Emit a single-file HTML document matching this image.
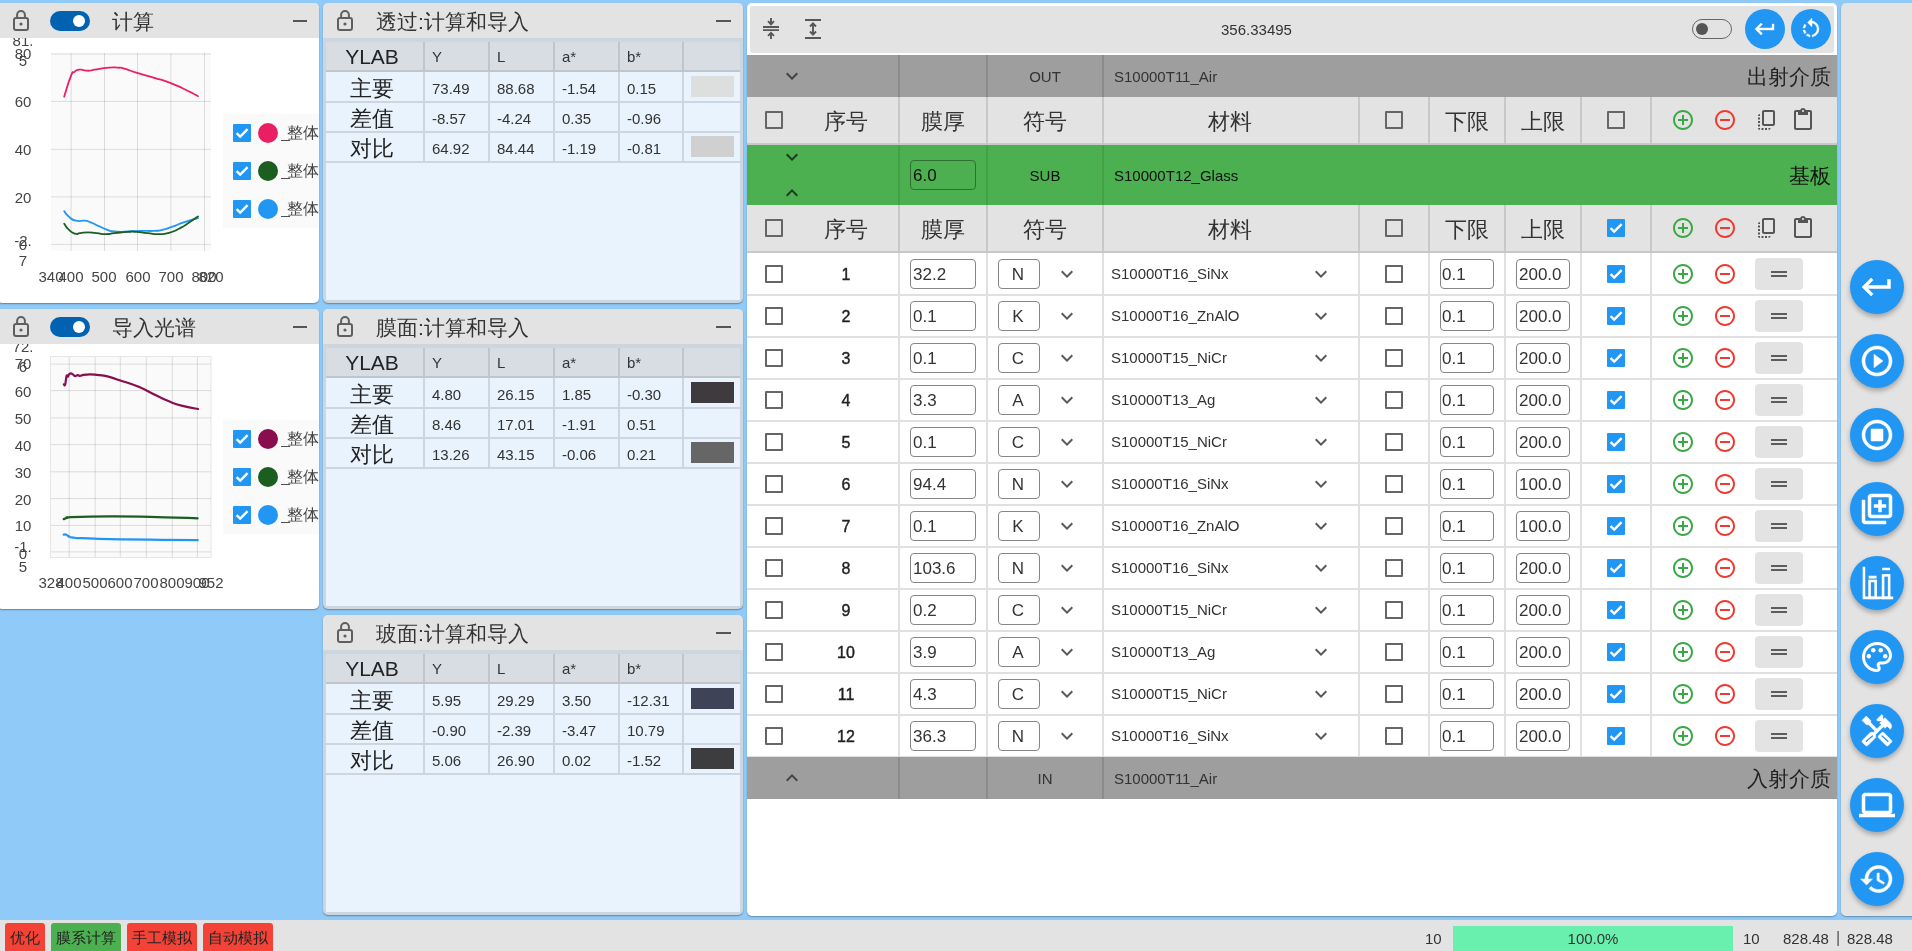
<!DOCTYPE html><html><head><meta charset="utf-8"><style>
html,body{margin:0;padding:0;}
body{width:1912px;height:951px;overflow:hidden;position:relative;background:#90CAF9;font-family:"Liberation Sans",sans-serif;color:#333;}
div{box-sizing:content-box;}
.inp{position:absolute;border:1px solid #858585;border-radius:4px;background:#fff;box-sizing:border-box;}
.fab{position:absolute;width:54px;height:54px;border-radius:50%;background:#2196F3;box-shadow:0 3px 5px rgba(0,0,0,.28);}
</style></head><body>

<div style="position:absolute;left:-3px;top:3px;width:322px;height:300px;background:#fff;border-radius:5px;box-shadow:0 1px 1.5px rgba(0,0,0,.35)"></div>
<div style="position:absolute;left:-3px;top:3px;width:322px;height:35px;background:#E3E3E3;border-radius:5px 5px 0 0;z-index:2"></div>
<svg style="position:absolute;left:13px;top:9px;width:17px;height:24px;z-index:3" viewBox="0 0 17 24"><path d="M4.1 9V6a3.9 3.9 0 0 1 7.8 0V9" fill="none" stroke="#5f5f5f" stroke-width="2"/><rect x="1" y="9" width="14" height="11.9" rx="2" fill="none" stroke="#5f5f5f" stroke-width="2"/><circle cx="8" cy="15" r="1.6" fill="#5f5f5f"/></svg>
<div style="position:absolute;left:50px;top:11px;width:40px;height:20px;z-index:3;background:#0062B1;border-radius:10px"><div style="position:absolute;left:23px;top:4px;width:12px;height:12px;background:#fff;border-radius:50%"></div></div>
<div style="position:absolute;left:112px;top:11px;font-size:21px;line-height:1;color:#333;white-space:nowrap;will-change:transform;z-index:3">计算</div>
<div style="position:absolute;left:293px;top:20px;width:14px;height:2px;background:#555;z-index:3"></div>
<div style="position:absolute;left:-3px;top:309px;width:322px;height:300px;background:#fff;border-radius:5px;box-shadow:0 1px 1.5px rgba(0,0,0,.35)"></div>
<div style="position:absolute;left:-3px;top:309px;width:322px;height:35px;background:#E3E3E3;border-radius:5px 5px 0 0;z-index:2"></div>
<svg style="position:absolute;left:13px;top:315px;width:17px;height:24px;z-index:3" viewBox="0 0 17 24"><path d="M4.1 9V6a3.9 3.9 0 0 1 7.8 0V9" fill="none" stroke="#5f5f5f" stroke-width="2"/><rect x="1" y="9" width="14" height="11.9" rx="2" fill="none" stroke="#5f5f5f" stroke-width="2"/><circle cx="8" cy="15" r="1.6" fill="#5f5f5f"/></svg>
<div style="position:absolute;left:50px;top:317px;width:40px;height:20px;z-index:3;background:#0062B1;border-radius:10px"><div style="position:absolute;left:23px;top:4px;width:12px;height:12px;background:#fff;border-radius:50%"></div></div>
<div style="position:absolute;left:112px;top:317px;font-size:21px;line-height:1;color:#333;white-space:nowrap;will-change:transform;z-index:3">导入光谱</div>
<div style="position:absolute;left:293px;top:326px;width:14px;height:2px;background:#555;z-index:3"></div>
<div style="position:absolute;left:223px;top:114px;width:96px;height:114px;background:#FAFAFA"></div>
<div style="position:absolute;left:233px;top:124px;width:18px;height:18px;background:#2196F3;border-radius:1px"><svg style="position:absolute;left:0;top:0;width:18px;height:18px" viewBox="0 0 18 18"><path d="M3.6 9.2L7.2 12.6L14.6 5.2" fill="none" stroke="#fff" stroke-width="2.4"/></svg></div>
<div style="position:absolute;left:258px;top:123px;width:20px;height:20px;background:#E91E63;border-radius:50%"></div>
<div style="position:absolute;left:281px;top:125px;width:38px;overflow:hidden;font-size:16px;line-height:1;color:#444;white-space:nowrap;will-change:transform"><span style="letter-spacing:-3px">_</span>整体透</div>
<div style="position:absolute;left:233px;top:162px;width:18px;height:18px;background:#2196F3;border-radius:1px"><svg style="position:absolute;left:0;top:0;width:18px;height:18px" viewBox="0 0 18 18"><path d="M3.6 9.2L7.2 12.6L14.6 5.2" fill="none" stroke="#fff" stroke-width="2.4"/></svg></div>
<div style="position:absolute;left:258px;top:161px;width:20px;height:20px;background:#1B5E20;border-radius:50%"></div>
<div style="position:absolute;left:281px;top:163px;width:38px;overflow:hidden;font-size:16px;line-height:1;color:#444;white-space:nowrap;will-change:transform"><span style="letter-spacing:-3px">_</span>整体透</div>
<div style="position:absolute;left:233px;top:200px;width:18px;height:18px;background:#2196F3;border-radius:1px"><svg style="position:absolute;left:0;top:0;width:18px;height:18px" viewBox="0 0 18 18"><path d="M3.6 9.2L7.2 12.6L14.6 5.2" fill="none" stroke="#fff" stroke-width="2.4"/></svg></div>
<div style="position:absolute;left:258px;top:199px;width:20px;height:20px;background:#2196F3;border-radius:50%"></div>
<div style="position:absolute;left:281px;top:201px;width:38px;overflow:hidden;font-size:16px;line-height:1;color:#444;white-space:nowrap;will-change:transform"><span style="letter-spacing:-3px">_</span>整体透</div>
<div style="position:absolute;left:223px;top:420px;width:96px;height:114px;background:#FAFAFA"></div>
<div style="position:absolute;left:233px;top:430px;width:18px;height:18px;background:#2196F3;border-radius:1px"><svg style="position:absolute;left:0;top:0;width:18px;height:18px" viewBox="0 0 18 18"><path d="M3.6 9.2L7.2 12.6L14.6 5.2" fill="none" stroke="#fff" stroke-width="2.4"/></svg></div>
<div style="position:absolute;left:258px;top:429px;width:20px;height:20px;background:#880E4F;border-radius:50%"></div>
<div style="position:absolute;left:281px;top:431px;width:38px;overflow:hidden;font-size:16px;line-height:1;color:#444;white-space:nowrap;will-change:transform"><span style="letter-spacing:-3px">_</span>整体透</div>
<div style="position:absolute;left:233px;top:468px;width:18px;height:18px;background:#2196F3;border-radius:1px"><svg style="position:absolute;left:0;top:0;width:18px;height:18px" viewBox="0 0 18 18"><path d="M3.6 9.2L7.2 12.6L14.6 5.2" fill="none" stroke="#fff" stroke-width="2.4"/></svg></div>
<div style="position:absolute;left:258px;top:467px;width:20px;height:20px;background:#1B5E20;border-radius:50%"></div>
<div style="position:absolute;left:281px;top:469px;width:38px;overflow:hidden;font-size:16px;line-height:1;color:#444;white-space:nowrap;will-change:transform"><span style="letter-spacing:-3px">_</span>整体透</div>
<div style="position:absolute;left:233px;top:506px;width:18px;height:18px;background:#2196F3;border-radius:1px"><svg style="position:absolute;left:0;top:0;width:18px;height:18px" viewBox="0 0 18 18"><path d="M3.6 9.2L7.2 12.6L14.6 5.2" fill="none" stroke="#fff" stroke-width="2.4"/></svg></div>
<div style="position:absolute;left:258px;top:505px;width:20px;height:20px;background:#2196F3;border-radius:50%"></div>
<div style="position:absolute;left:281px;top:507px;width:38px;overflow:hidden;font-size:16px;line-height:1;color:#444;white-space:nowrap;will-change:transform"><span style="letter-spacing:-3px">_</span>整体透</div>
<svg style="position:absolute;left:0;top:38px;width:319px;height:262px" viewBox="0 38 319 262">
<rect x="51" y="53" width="160" height="198" fill="#FAFAFA"/>
<line x1="71.1" y1="53" x2="71.1" y2="251" stroke="rgba(0,0,0,0.12)" stroke-width="1"/>
<line x1="104.5" y1="53" x2="104.5" y2="251" stroke="rgba(0,0,0,0.12)" stroke-width="1"/>
<line x1="137.5" y1="53" x2="137.5" y2="251" stroke="rgba(0,0,0,0.12)" stroke-width="1"/>
<line x1="170.9" y1="53" x2="170.9" y2="251" stroke="rgba(0,0,0,0.12)" stroke-width="1"/>
<line x1="204.5" y1="53" x2="204.5" y2="251" stroke="rgba(0,0,0,0.12)" stroke-width="1"/>
<line x1="51" y1="54" x2="211" y2="54" stroke="rgba(0,0,0,0.12)" stroke-width="1"/>
<line x1="51" y1="101.4" x2="211" y2="101.4" stroke="rgba(0,0,0,0.12)" stroke-width="1"/>
<line x1="51" y1="149.3" x2="211" y2="149.3" stroke="rgba(0,0,0,0.12)" stroke-width="1"/>
<line x1="51" y1="196.9" x2="211" y2="196.9" stroke="rgba(0,0,0,0.12)" stroke-width="1"/>
<line x1="51" y1="244.4" x2="211" y2="244.4" stroke="rgba(0,0,0,0.12)" stroke-width="1"/>
<path d="M64.20,96.60 C66.37,89.97 67.37,84.90 70.70,76.70 C74.03,68.50 71.33,74.33 74.20,72.00 C77.07,69.67 75.87,70.27 79.30,69.70 C82.73,69.13 81.03,69.97 84.50,70.30 C87.97,70.63 86.23,70.90 89.70,70.70 C93.17,70.50 88.57,70.70 94.90,69.70 C101.23,68.70 100.93,68.37 108.70,67.70 C116.47,67.03 113.03,67.40 118.20,67.70 C123.37,68.00 117.90,66.87 124.20,68.60 C130.50,70.33 127.33,69.90 137.10,72.90 C146.87,75.90 142.27,74.17 153.50,77.60 C164.73,81.03 159.30,78.73 170.80,83.20 C182.30,87.67 178.93,86.67 188.00,91.00 C197.07,95.33 194.67,94.47 198.00,96.20" fill="none" stroke="#E91E63" stroke-width="1.8" stroke-linejoin="round" stroke-linecap="round"/>
<path d="M64.20,211.20 C65.80,213.07 65.10,213.63 69.00,216.80 C72.90,219.97 70.73,219.40 75.90,220.70 C81.07,222.00 79.60,220.17 84.50,220.70 C89.40,221.23 86.00,220.57 90.60,222.30 C95.20,224.03 93.13,223.57 98.30,225.90 C103.47,228.23 100.63,227.43 106.10,229.30 C111.57,231.17 107.50,230.77 114.70,231.50 C121.90,232.23 119.07,231.70 127.70,231.50 C136.33,231.30 132.00,231.10 140.60,230.90 C149.20,230.70 146.30,231.27 153.50,230.90 C160.70,230.53 155.87,231.20 162.20,229.80 C168.53,228.40 165.33,229.17 172.50,226.70 C179.67,224.23 175.20,225.27 183.70,222.40 C192.20,219.53 193.23,219.53 198.00,218.10" fill="none" stroke="#2196F3" stroke-width="1.8" stroke-linejoin="round" stroke-linecap="round"/>
<path d="M64.20,223.70 C65.80,225.73 65.40,226.50 69.00,229.80 C72.60,233.10 71.27,232.47 75.00,233.60 C78.73,234.73 75.87,233.60 80.20,233.20 C84.53,232.80 82.53,232.40 88.00,232.40 C93.47,232.40 90.57,232.63 96.60,233.20 C102.63,233.77 100.07,234.10 106.10,234.10 C112.13,234.10 107.50,233.97 114.70,233.20 C121.90,232.43 120.50,232.27 127.70,231.80 C134.90,231.33 129.70,231.33 136.30,231.80 C142.90,232.27 140.03,232.43 147.50,233.20 C154.97,233.97 151.50,234.23 158.70,234.10 C165.90,233.97 162.20,234.67 169.10,232.80 C176.00,230.93 173.10,231.67 179.40,228.50 C185.70,225.33 181.80,227.33 188.00,223.30 C194.20,219.27 194.67,218.70 198.00,216.40" fill="none" stroke="#1B5E20" stroke-width="1.8" stroke-linejoin="round" stroke-linecap="round"/>
</svg>
<div style="position:absolute;left:-177px;top:46px;width:400px;text-align:center;font-size:15px;line-height:1;color:#444;white-space:nowrap;will-change:transform;">80</div>
<div style="position:absolute;left:-177px;top:33px;width:400px;text-align:center;font-size:15px;line-height:1;color:#444;white-space:nowrap;will-change:transform;">81.</div>
<div style="position:absolute;left:-177px;top:53px;width:400px;text-align:center;font-size:15px;line-height:1;color:#444;white-space:nowrap;will-change:transform;">5</div>
<div style="position:absolute;left:-177px;top:94px;width:400px;text-align:center;font-size:15px;line-height:1;color:#444;white-space:nowrap;will-change:transform;">60</div>
<div style="position:absolute;left:-177px;top:142px;width:400px;text-align:center;font-size:15px;line-height:1;color:#444;white-space:nowrap;will-change:transform;">40</div>
<div style="position:absolute;left:-177px;top:190px;width:400px;text-align:center;font-size:15px;line-height:1;color:#444;white-space:nowrap;will-change:transform;">20</div>
<div style="position:absolute;left:-177px;top:233px;width:400px;text-align:center;font-size:15px;line-height:1;color:#444;white-space:nowrap;will-change:transform;">-2.</div>
<div style="position:absolute;left:-177px;top:237px;width:400px;text-align:center;font-size:15px;line-height:1;color:#444;white-space:nowrap;will-change:transform;">0</div>
<div style="position:absolute;left:-177px;top:253px;width:400px;text-align:center;font-size:15px;line-height:1;color:#444;white-space:nowrap;will-change:transform;">7</div>
<div style="position:absolute;left:-149px;top:269px;width:400px;text-align:center;font-size:15px;line-height:1;color:#444;white-space:nowrap;will-change:transform;">340</div>
<div style="position:absolute;left:-129px;top:269px;width:400px;text-align:center;font-size:15px;line-height:1;color:#444;white-space:nowrap;will-change:transform;">400</div>
<div style="position:absolute;left:-96px;top:269px;width:400px;text-align:center;font-size:15px;line-height:1;color:#444;white-space:nowrap;will-change:transform;">500</div>
<div style="position:absolute;left:-62px;top:269px;width:400px;text-align:center;font-size:15px;line-height:1;color:#444;white-space:nowrap;will-change:transform;">600</div>
<div style="position:absolute;left:-29px;top:269px;width:400px;text-align:center;font-size:15px;line-height:1;color:#444;white-space:nowrap;will-change:transform;">700</div>
<div style="position:absolute;left:4px;top:269px;width:400px;text-align:center;font-size:15px;line-height:1;color:#444;white-space:nowrap;will-change:transform;">800</div>
<div style="position:absolute;left:11px;top:269px;width:400px;text-align:center;font-size:15px;line-height:1;color:#444;white-space:nowrap;will-change:transform;">820</div>
<svg style="position:absolute;left:0;top:345px;width:319px;height:262px" viewBox="0 345 319 262">
<rect x="50.5" y="356.5" width="160.5" height="201" fill="#FAFAFA" stroke="#E6E6E6" stroke-width="1"/>
<line x1="69.2" y1="357" x2="69.2" y2="557" stroke="rgba(0,0,0,0.12)" stroke-width="1"/>
<line x1="95.2" y1="357" x2="95.2" y2="557" stroke="rgba(0,0,0,0.12)" stroke-width="1"/>
<line x1="120.3" y1="357" x2="120.3" y2="557" stroke="rgba(0,0,0,0.12)" stroke-width="1"/>
<line x1="146.3" y1="357" x2="146.3" y2="557" stroke="rgba(0,0,0,0.12)" stroke-width="1"/>
<line x1="172.3" y1="357" x2="172.3" y2="557" stroke="rgba(0,0,0,0.12)" stroke-width="1"/>
<line x1="197.4" y1="357" x2="197.4" y2="557" stroke="rgba(0,0,0,0.12)" stroke-width="1"/>
<line x1="51" y1="364.1" x2="211" y2="364.1" stroke="rgba(0,0,0,0.12)" stroke-width="1"/>
<line x1="51" y1="390.6" x2="211" y2="390.6" stroke="rgba(0,0,0,0.12)" stroke-width="1"/>
<line x1="51" y1="417.9" x2="211" y2="417.9" stroke="rgba(0,0,0,0.12)" stroke-width="1"/>
<line x1="51" y1="444.7" x2="211" y2="444.7" stroke="rgba(0,0,0,0.12)" stroke-width="1"/>
<line x1="51" y1="471.8" x2="211" y2="471.8" stroke="rgba(0,0,0,0.12)" stroke-width="1"/>
<line x1="51" y1="498.6" x2="211" y2="498.6" stroke="rgba(0,0,0,0.12)" stroke-width="1"/>
<line x1="51" y1="525.4" x2="211" y2="525.4" stroke="rgba(0,0,0,0.12)" stroke-width="1"/>
<line x1="51" y1="551.9" x2="211" y2="551.9" stroke="rgba(0,0,0,0.12)" stroke-width="1"/>
<path d="M63.80,384.30 C64.04,384.46 64.58,385.94 65.00,385.10 C65.42,384.26 65.56,382.02 65.90,380.10 C66.24,378.18 66.28,376.18 66.70,375.50 C67.12,374.82 67.58,376.88 68.00,376.70 C68.42,376.52 68.22,375.26 68.80,374.60 C69.38,373.94 70.14,373.50 70.90,373.40 C71.66,373.30 71.76,373.56 72.60,374.10 C73.44,374.64 74.10,375.90 75.10,376.10 C76.10,376.30 76.60,375.14 77.60,375.10 C78.60,375.06 78.92,375.94 80.10,375.90 C81.28,375.86 81.50,375.20 83.50,374.90 C85.50,374.60 87.44,374.40 90.10,374.40 C92.76,374.40 93.78,374.60 96.80,374.90 C99.82,375.20 100.50,374.78 105.20,375.90 C109.90,377.02 113.60,378.32 120.30,380.50 C127.00,382.68 131.68,383.88 138.70,386.80 C145.72,389.72 148.70,391.92 155.40,395.10 C162.10,398.28 166.34,400.44 172.20,402.70 C178.06,404.96 179.52,405.14 184.70,406.40 C189.88,407.66 195.42,408.48 198.10,409.00" fill="none" stroke="#880E4F" stroke-width="2.2" stroke-linejoin="round" stroke-linecap="round"/>
<path d="M63.70,519.10 C64.36,518.88 65.52,518.38 67.00,518.00 C68.48,517.62 62.62,517.52 71.10,517.20 C79.58,516.88 93.62,516.48 109.40,516.40 C125.18,516.32 132.34,516.42 150.00,516.80 C167.66,517.18 188.16,518.00 197.70,518.30" fill="none" stroke="#1B5E20" stroke-width="2.2" stroke-linejoin="round" stroke-linecap="round"/>
<path d="M63.70,534.70 C64.16,534.66 65.14,534.24 66.00,534.50 C66.86,534.76 67.20,535.50 68.00,536.00 C68.80,536.50 69.38,536.72 70.00,537.00 C70.62,537.28 69.90,537.20 71.10,537.40 C72.30,537.60 73.82,537.84 76.00,538.00 C78.18,538.16 75.32,537.98 82.00,538.20 C88.68,538.42 95.80,538.80 109.40,539.10 C123.00,539.40 132.34,539.48 150.00,539.70 C167.66,539.92 188.16,540.10 197.70,540.20" fill="none" stroke="#2196F3" stroke-width="2.2" stroke-linejoin="round" stroke-linecap="round"/>
</svg>
<div style="position:absolute;left:-177px;top:339px;width:400px;text-align:center;font-size:15px;line-height:1;color:#444;white-space:nowrap;will-change:transform;">72.</div>
<div style="position:absolute;left:-177px;top:356px;width:400px;text-align:center;font-size:15px;line-height:1;color:#444;white-space:nowrap;will-change:transform;">70</div>
<div style="position:absolute;left:-177px;top:359px;width:400px;text-align:center;font-size:15px;line-height:1;color:#444;white-space:nowrap;will-change:transform;">6</div>
<div style="position:absolute;left:-177px;top:384px;width:400px;text-align:center;font-size:15px;line-height:1;color:#444;white-space:nowrap;will-change:transform;">60</div>
<div style="position:absolute;left:-177px;top:411px;width:400px;text-align:center;font-size:15px;line-height:1;color:#444;white-space:nowrap;will-change:transform;">50</div>
<div style="position:absolute;left:-177px;top:438px;width:400px;text-align:center;font-size:15px;line-height:1;color:#444;white-space:nowrap;will-change:transform;">40</div>
<div style="position:absolute;left:-177px;top:465px;width:400px;text-align:center;font-size:15px;line-height:1;color:#444;white-space:nowrap;will-change:transform;">30</div>
<div style="position:absolute;left:-177px;top:492px;width:400px;text-align:center;font-size:15px;line-height:1;color:#444;white-space:nowrap;will-change:transform;">20</div>
<div style="position:absolute;left:-177px;top:518px;width:400px;text-align:center;font-size:15px;line-height:1;color:#444;white-space:nowrap;will-change:transform;">10</div>
<div style="position:absolute;left:-177px;top:539px;width:400px;text-align:center;font-size:15px;line-height:1;color:#444;white-space:nowrap;will-change:transform;">-1.</div>
<div style="position:absolute;left:-177px;top:546px;width:400px;text-align:center;font-size:15px;line-height:1;color:#444;white-space:nowrap;will-change:transform;">0</div>
<div style="position:absolute;left:-177px;top:559px;width:400px;text-align:center;font-size:15px;line-height:1;color:#444;white-space:nowrap;will-change:transform;">5</div>
<div style="position:absolute;left:-149px;top:575px;width:400px;text-align:center;font-size:15px;line-height:1;color:#444;white-space:nowrap;will-change:transform;">328</div>
<div style="position:absolute;left:-131px;top:575px;width:400px;text-align:center;font-size:15px;line-height:1;color:#444;white-space:nowrap;will-change:transform;">400</div>
<div style="position:absolute;left:-105px;top:575px;width:400px;text-align:center;font-size:15px;line-height:1;color:#444;white-space:nowrap;will-change:transform;">500</div>
<div style="position:absolute;left:-80px;top:575px;width:400px;text-align:center;font-size:15px;line-height:1;color:#444;white-space:nowrap;will-change:transform;">600</div>
<div style="position:absolute;left:-54px;top:575px;width:400px;text-align:center;font-size:15px;line-height:1;color:#444;white-space:nowrap;will-change:transform;">700</div>
<div style="position:absolute;left:-28px;top:575px;width:400px;text-align:center;font-size:15px;line-height:1;color:#444;white-space:nowrap;will-change:transform;">800</div>
<div style="position:absolute;left:-3px;top:575px;width:400px;text-align:center;font-size:15px;line-height:1;color:#444;white-space:nowrap;will-change:transform;">900</div>
<div style="position:absolute;left:11px;top:575px;width:400px;text-align:center;font-size:15px;line-height:1;color:#444;white-space:nowrap;will-change:transform;">952</div>
<div style="position:absolute;left:323px;top:3px;width:420px;height:300px;background:#CDD5DF;border-radius:5px;box-shadow:0 1px 1.5px rgba(0,0,0,.35)"></div>
<div style="position:absolute;left:323px;top:3px;width:420px;height:35px;background:#E3E3E3;border-radius:5px 5px 0 0"></div>
<svg style="position:absolute;left:337px;top:9px;width:17px;height:24px" viewBox="0 0 17 24"><path d="M4.1 9V6a3.9 3.9 0 0 1 7.8 0V9" fill="none" stroke="#5f5f5f" stroke-width="2"/><rect x="1" y="9" width="14" height="11.9" rx="2" fill="none" stroke="#5f5f5f" stroke-width="2"/><circle cx="8" cy="15" r="1.6" fill="#5f5f5f"/></svg>
<div style="position:absolute;left:376px;top:11px;font-size:21px;line-height:1;color:#333;white-space:nowrap;will-change:transform;">透过:计算和导入</div>
<div style="position:absolute;left:716px;top:20px;width:15px;height:2px;background:#555"></div>
<div style="position:absolute;left:326px;top:42px;width:414px;height:258px;background:#E8F3FD"></div>
<div style="position:absolute;left:326px;top:42px;width:414px;height:28px;background:#D8DDE4"></div>
<div style="position:absolute;left:326px;top:70px;width:414px;height:2px;background:#BFC5CB"></div>
<div style="position:absolute;left:423px;top:42px;width:2px;height:28px;background:#BFC5CB"></div>
<div style="position:absolute;left:423px;top:72px;width:2px;height:91px;background:#CDD5DF"></div>
<div style="position:absolute;left:488px;top:42px;width:2px;height:28px;background:#BFC5CB"></div>
<div style="position:absolute;left:488px;top:72px;width:2px;height:91px;background:#CDD5DF"></div>
<div style="position:absolute;left:553px;top:42px;width:2px;height:28px;background:#BFC5CB"></div>
<div style="position:absolute;left:553px;top:72px;width:2px;height:91px;background:#CDD5DF"></div>
<div style="position:absolute;left:618px;top:42px;width:2px;height:28px;background:#BFC5CB"></div>
<div style="position:absolute;left:618px;top:72px;width:2px;height:91px;background:#CDD5DF"></div>
<div style="position:absolute;left:682px;top:42px;width:2px;height:28px;background:#BFC5CB"></div>
<div style="position:absolute;left:682px;top:72px;width:2px;height:91px;background:#CDD5DF"></div>
<div style="position:absolute;left:326px;top:101px;width:414px;height:2px;background:#CDD5DF"></div>
<div style="position:absolute;left:326px;top:131px;width:414px;height:2px;background:#CDD5DF"></div>
<div style="position:absolute;left:326px;top:161px;width:414px;height:2px;background:#CDD5DF"></div>
<div style="position:absolute;left:172px;top:46px;width:400px;text-align:center;font-size:21px;line-height:1;color:#222;white-space:nowrap;will-change:transform;">YLAB</div>
<div style="position:absolute;left:432px;top:49px;font-size:15px;line-height:1;color:#333;white-space:nowrap;will-change:transform;">Y</div>
<div style="position:absolute;left:497px;top:49px;font-size:15px;line-height:1;color:#333;white-space:nowrap;will-change:transform;">L</div>
<div style="position:absolute;left:562px;top:49px;font-size:15px;line-height:1;color:#333;white-space:nowrap;will-change:transform;">a*</div>
<div style="position:absolute;left:627px;top:49px;font-size:15px;line-height:1;color:#333;white-space:nowrap;will-change:transform;">b*</div>
<div style="position:absolute;left:172px;top:78px;width:400px;text-align:center;font-size:22px;line-height:1;color:#222;white-space:nowrap;will-change:transform;">主要</div>
<div style="position:absolute;left:432px;top:81px;font-size:15px;line-height:1;color:#333;white-space:nowrap;will-change:transform;">73.49</div>
<div style="position:absolute;left:497px;top:81px;font-size:15px;line-height:1;color:#333;white-space:nowrap;will-change:transform;">88.68</div>
<div style="position:absolute;left:562px;top:81px;font-size:15px;line-height:1;color:#333;white-space:nowrap;will-change:transform;">-1.54</div>
<div style="position:absolute;left:627px;top:81px;font-size:15px;line-height:1;color:#333;white-space:nowrap;will-change:transform;">0.15</div>
<div style="position:absolute;left:691px;top:76px;width:43px;height:21px;background:#DCDFDE"></div>
<div style="position:absolute;left:172px;top:108px;width:400px;text-align:center;font-size:22px;line-height:1;color:#222;white-space:nowrap;will-change:transform;">差值</div>
<div style="position:absolute;left:432px;top:111px;font-size:15px;line-height:1;color:#333;white-space:nowrap;will-change:transform;">-8.57</div>
<div style="position:absolute;left:497px;top:111px;font-size:15px;line-height:1;color:#333;white-space:nowrap;will-change:transform;">-4.24</div>
<div style="position:absolute;left:562px;top:111px;font-size:15px;line-height:1;color:#333;white-space:nowrap;will-change:transform;">0.35</div>
<div style="position:absolute;left:627px;top:111px;font-size:15px;line-height:1;color:#333;white-space:nowrap;will-change:transform;">-0.96</div>
<div style="position:absolute;left:172px;top:138px;width:400px;text-align:center;font-size:22px;line-height:1;color:#222;white-space:nowrap;will-change:transform;">对比</div>
<div style="position:absolute;left:432px;top:141px;font-size:15px;line-height:1;color:#333;white-space:nowrap;will-change:transform;">64.92</div>
<div style="position:absolute;left:497px;top:141px;font-size:15px;line-height:1;color:#333;white-space:nowrap;will-change:transform;">84.44</div>
<div style="position:absolute;left:562px;top:141px;font-size:15px;line-height:1;color:#333;white-space:nowrap;will-change:transform;">-1.19</div>
<div style="position:absolute;left:627px;top:141px;font-size:15px;line-height:1;color:#333;white-space:nowrap;will-change:transform;">-0.81</div>
<div style="position:absolute;left:691px;top:136px;width:43px;height:21px;background:#D0D0D0"></div>
<div style="position:absolute;left:323px;top:309px;width:420px;height:300px;background:#CDD5DF;border-radius:5px;box-shadow:0 1px 1.5px rgba(0,0,0,.35)"></div>
<div style="position:absolute;left:323px;top:309px;width:420px;height:35px;background:#E3E3E3;border-radius:5px 5px 0 0"></div>
<svg style="position:absolute;left:337px;top:315px;width:17px;height:24px" viewBox="0 0 17 24"><path d="M4.1 9V6a3.9 3.9 0 0 1 7.8 0V9" fill="none" stroke="#5f5f5f" stroke-width="2"/><rect x="1" y="9" width="14" height="11.9" rx="2" fill="none" stroke="#5f5f5f" stroke-width="2"/><circle cx="8" cy="15" r="1.6" fill="#5f5f5f"/></svg>
<div style="position:absolute;left:376px;top:317px;font-size:21px;line-height:1;color:#333;white-space:nowrap;will-change:transform;">膜面:计算和导入</div>
<div style="position:absolute;left:716px;top:326px;width:15px;height:2px;background:#555"></div>
<div style="position:absolute;left:326px;top:348px;width:414px;height:258px;background:#E8F3FD"></div>
<div style="position:absolute;left:326px;top:348px;width:414px;height:28px;background:#D8DDE4"></div>
<div style="position:absolute;left:326px;top:376px;width:414px;height:2px;background:#BFC5CB"></div>
<div style="position:absolute;left:423px;top:348px;width:2px;height:28px;background:#BFC5CB"></div>
<div style="position:absolute;left:423px;top:378px;width:2px;height:91px;background:#CDD5DF"></div>
<div style="position:absolute;left:488px;top:348px;width:2px;height:28px;background:#BFC5CB"></div>
<div style="position:absolute;left:488px;top:378px;width:2px;height:91px;background:#CDD5DF"></div>
<div style="position:absolute;left:553px;top:348px;width:2px;height:28px;background:#BFC5CB"></div>
<div style="position:absolute;left:553px;top:378px;width:2px;height:91px;background:#CDD5DF"></div>
<div style="position:absolute;left:618px;top:348px;width:2px;height:28px;background:#BFC5CB"></div>
<div style="position:absolute;left:618px;top:378px;width:2px;height:91px;background:#CDD5DF"></div>
<div style="position:absolute;left:682px;top:348px;width:2px;height:28px;background:#BFC5CB"></div>
<div style="position:absolute;left:682px;top:378px;width:2px;height:91px;background:#CDD5DF"></div>
<div style="position:absolute;left:326px;top:407px;width:414px;height:2px;background:#CDD5DF"></div>
<div style="position:absolute;left:326px;top:437px;width:414px;height:2px;background:#CDD5DF"></div>
<div style="position:absolute;left:326px;top:467px;width:414px;height:2px;background:#CDD5DF"></div>
<div style="position:absolute;left:172px;top:352px;width:400px;text-align:center;font-size:21px;line-height:1;color:#222;white-space:nowrap;will-change:transform;">YLAB</div>
<div style="position:absolute;left:432px;top:355px;font-size:15px;line-height:1;color:#333;white-space:nowrap;will-change:transform;">Y</div>
<div style="position:absolute;left:497px;top:355px;font-size:15px;line-height:1;color:#333;white-space:nowrap;will-change:transform;">L</div>
<div style="position:absolute;left:562px;top:355px;font-size:15px;line-height:1;color:#333;white-space:nowrap;will-change:transform;">a*</div>
<div style="position:absolute;left:627px;top:355px;font-size:15px;line-height:1;color:#333;white-space:nowrap;will-change:transform;">b*</div>
<div style="position:absolute;left:172px;top:384px;width:400px;text-align:center;font-size:22px;line-height:1;color:#222;white-space:nowrap;will-change:transform;">主要</div>
<div style="position:absolute;left:432px;top:387px;font-size:15px;line-height:1;color:#333;white-space:nowrap;will-change:transform;">4.80</div>
<div style="position:absolute;left:497px;top:387px;font-size:15px;line-height:1;color:#333;white-space:nowrap;will-change:transform;">26.15</div>
<div style="position:absolute;left:562px;top:387px;font-size:15px;line-height:1;color:#333;white-space:nowrap;will-change:transform;">1.85</div>
<div style="position:absolute;left:627px;top:387px;font-size:15px;line-height:1;color:#333;white-space:nowrap;will-change:transform;">-0.30</div>
<div style="position:absolute;left:691px;top:382px;width:43px;height:21px;background:#3F3A3D"></div>
<div style="position:absolute;left:172px;top:414px;width:400px;text-align:center;font-size:22px;line-height:1;color:#222;white-space:nowrap;will-change:transform;">差值</div>
<div style="position:absolute;left:432px;top:417px;font-size:15px;line-height:1;color:#333;white-space:nowrap;will-change:transform;">8.46</div>
<div style="position:absolute;left:497px;top:417px;font-size:15px;line-height:1;color:#333;white-space:nowrap;will-change:transform;">17.01</div>
<div style="position:absolute;left:562px;top:417px;font-size:15px;line-height:1;color:#333;white-space:nowrap;will-change:transform;">-1.91</div>
<div style="position:absolute;left:627px;top:417px;font-size:15px;line-height:1;color:#333;white-space:nowrap;will-change:transform;">0.51</div>
<div style="position:absolute;left:172px;top:444px;width:400px;text-align:center;font-size:22px;line-height:1;color:#222;white-space:nowrap;will-change:transform;">对比</div>
<div style="position:absolute;left:432px;top:447px;font-size:15px;line-height:1;color:#333;white-space:nowrap;will-change:transform;">13.26</div>
<div style="position:absolute;left:497px;top:447px;font-size:15px;line-height:1;color:#333;white-space:nowrap;will-change:transform;">43.15</div>
<div style="position:absolute;left:562px;top:447px;font-size:15px;line-height:1;color:#333;white-space:nowrap;will-change:transform;">-0.06</div>
<div style="position:absolute;left:627px;top:447px;font-size:15px;line-height:1;color:#333;white-space:nowrap;will-change:transform;">0.21</div>
<div style="position:absolute;left:691px;top:442px;width:43px;height:21px;background:#666666"></div>
<div style="position:absolute;left:323px;top:615px;width:420px;height:300px;background:#CDD5DF;border-radius:5px;box-shadow:0 1px 1.5px rgba(0,0,0,.35)"></div>
<div style="position:absolute;left:323px;top:615px;width:420px;height:35px;background:#E3E3E3;border-radius:5px 5px 0 0"></div>
<svg style="position:absolute;left:337px;top:621px;width:17px;height:24px" viewBox="0 0 17 24"><path d="M4.1 9V6a3.9 3.9 0 0 1 7.8 0V9" fill="none" stroke="#5f5f5f" stroke-width="2"/><rect x="1" y="9" width="14" height="11.9" rx="2" fill="none" stroke="#5f5f5f" stroke-width="2"/><circle cx="8" cy="15" r="1.6" fill="#5f5f5f"/></svg>
<div style="position:absolute;left:376px;top:623px;font-size:21px;line-height:1;color:#333;white-space:nowrap;will-change:transform;">玻面:计算和导入</div>
<div style="position:absolute;left:716px;top:632px;width:15px;height:2px;background:#555"></div>
<div style="position:absolute;left:326px;top:654px;width:414px;height:258px;background:#E8F3FD"></div>
<div style="position:absolute;left:326px;top:654px;width:414px;height:28px;background:#D8DDE4"></div>
<div style="position:absolute;left:326px;top:682px;width:414px;height:2px;background:#BFC5CB"></div>
<div style="position:absolute;left:423px;top:654px;width:2px;height:28px;background:#BFC5CB"></div>
<div style="position:absolute;left:423px;top:684px;width:2px;height:91px;background:#CDD5DF"></div>
<div style="position:absolute;left:488px;top:654px;width:2px;height:28px;background:#BFC5CB"></div>
<div style="position:absolute;left:488px;top:684px;width:2px;height:91px;background:#CDD5DF"></div>
<div style="position:absolute;left:553px;top:654px;width:2px;height:28px;background:#BFC5CB"></div>
<div style="position:absolute;left:553px;top:684px;width:2px;height:91px;background:#CDD5DF"></div>
<div style="position:absolute;left:618px;top:654px;width:2px;height:28px;background:#BFC5CB"></div>
<div style="position:absolute;left:618px;top:684px;width:2px;height:91px;background:#CDD5DF"></div>
<div style="position:absolute;left:682px;top:654px;width:2px;height:28px;background:#BFC5CB"></div>
<div style="position:absolute;left:682px;top:684px;width:2px;height:91px;background:#CDD5DF"></div>
<div style="position:absolute;left:326px;top:713px;width:414px;height:2px;background:#CDD5DF"></div>
<div style="position:absolute;left:326px;top:743px;width:414px;height:2px;background:#CDD5DF"></div>
<div style="position:absolute;left:326px;top:773px;width:414px;height:2px;background:#CDD5DF"></div>
<div style="position:absolute;left:172px;top:658px;width:400px;text-align:center;font-size:21px;line-height:1;color:#222;white-space:nowrap;will-change:transform;">YLAB</div>
<div style="position:absolute;left:432px;top:661px;font-size:15px;line-height:1;color:#333;white-space:nowrap;will-change:transform;">Y</div>
<div style="position:absolute;left:497px;top:661px;font-size:15px;line-height:1;color:#333;white-space:nowrap;will-change:transform;">L</div>
<div style="position:absolute;left:562px;top:661px;font-size:15px;line-height:1;color:#333;white-space:nowrap;will-change:transform;">a*</div>
<div style="position:absolute;left:627px;top:661px;font-size:15px;line-height:1;color:#333;white-space:nowrap;will-change:transform;">b*</div>
<div style="position:absolute;left:172px;top:690px;width:400px;text-align:center;font-size:22px;line-height:1;color:#222;white-space:nowrap;will-change:transform;">主要</div>
<div style="position:absolute;left:432px;top:693px;font-size:15px;line-height:1;color:#333;white-space:nowrap;will-change:transform;">5.95</div>
<div style="position:absolute;left:497px;top:693px;font-size:15px;line-height:1;color:#333;white-space:nowrap;will-change:transform;">29.29</div>
<div style="position:absolute;left:562px;top:693px;font-size:15px;line-height:1;color:#333;white-space:nowrap;will-change:transform;">3.50</div>
<div style="position:absolute;left:627px;top:693px;font-size:15px;line-height:1;color:#333;white-space:nowrap;will-change:transform;">-12.31</div>
<div style="position:absolute;left:691px;top:688px;width:43px;height:21px;background:#3E4357"></div>
<div style="position:absolute;left:172px;top:720px;width:400px;text-align:center;font-size:22px;line-height:1;color:#222;white-space:nowrap;will-change:transform;">差值</div>
<div style="position:absolute;left:432px;top:723px;font-size:15px;line-height:1;color:#333;white-space:nowrap;will-change:transform;">-0.90</div>
<div style="position:absolute;left:497px;top:723px;font-size:15px;line-height:1;color:#333;white-space:nowrap;will-change:transform;">-2.39</div>
<div style="position:absolute;left:562px;top:723px;font-size:15px;line-height:1;color:#333;white-space:nowrap;will-change:transform;">-3.47</div>
<div style="position:absolute;left:627px;top:723px;font-size:15px;line-height:1;color:#333;white-space:nowrap;will-change:transform;">10.79</div>
<div style="position:absolute;left:172px;top:750px;width:400px;text-align:center;font-size:22px;line-height:1;color:#222;white-space:nowrap;will-change:transform;">对比</div>
<div style="position:absolute;left:432px;top:753px;font-size:15px;line-height:1;color:#333;white-space:nowrap;will-change:transform;">5.06</div>
<div style="position:absolute;left:497px;top:753px;font-size:15px;line-height:1;color:#333;white-space:nowrap;will-change:transform;">26.90</div>
<div style="position:absolute;left:562px;top:753px;font-size:15px;line-height:1;color:#333;white-space:nowrap;will-change:transform;">0.02</div>
<div style="position:absolute;left:627px;top:753px;font-size:15px;line-height:1;color:#333;white-space:nowrap;will-change:transform;">-1.52</div>
<div style="position:absolute;left:691px;top:748px;width:43px;height:21px;background:#3D3D3F"></div>
<div style="position:absolute;left:747px;top:3px;width:1090px;height:913px;background:#fff;border-radius:5px;box-shadow:0 1px 1.5px rgba(0,0,0,.3)"></div>
<div style="position:absolute;left:750px;top:6px;width:1084px;height:46px;background:#E3E3E3;border-radius:2px;box-shadow:0 1px 1px rgba(0,0,0,.12)"></div>
<svg style="position:absolute;left:750px;top:6px;width:90px;height:46px" viewBox="0 0 90 46"><g fill="none" stroke="#575757" stroke-width="1.9"><path d="M21 12V18.3M18 15.2L21 18.3L24 15.2"/><path d="M13 21H29M13 24.1H29"/><path d="M21 33V26.8M18 29.8L21 26.8L24 29.8"/><path d="M55 14H71M55 32H71"/><path d="M63 17.5V28.5M60 20.5L63 17.3L66 20.5M60 25.5L63 28.7L66 25.5"/></g></svg>
<div style="position:absolute;left:1221px;top:22px;font-size:15px;line-height:1;color:#333;white-space:nowrap;will-change:transform;">356.33495</div>
<div style="position:absolute;left:1692px;top:19px;width:38px;height:18px;border:1px solid #666;border-radius:10px"><div style="position:absolute;left:3px;top:3px;width:12px;height:12px;background:#555;border-radius:50%"></div></div>
<div style="position:absolute;left:1745px;top:9px;width:40px;height:40px;background:#2196F3;border-radius:50%"><svg style="position:absolute;left:8px;top:8px;width:24px;height:24px" viewBox="0 0 24 24"><path fill="#fff" stroke="#fff" stroke-width="0.4" d="M19 7v4H5.83l3.58-3.59L8 6l-6 6 6 6 1.41-1.41L5.83 13H21V7z"/></svg></div>
<div style="position:absolute;left:1791px;top:9px;width:40px;height:40px;background:#2196F3;border-radius:50%"><svg style="position:absolute;left:8px;top:8px;width:24px;height:24px" viewBox="0 0 24 24"><path fill="#fff" stroke="#fff" stroke-width="0.3" d="M7.11 8.53L5.7 7.11C4.8 8.27 4.24 9.61 4.07 11h2.02c.14-.87.49-1.72 1.02-2.47zM6.09 13H4.07c.17 1.39.72 2.730 1.62 3.89l1.41-1.42c-.52-.75-.87-1.59-1.01-2.47zm1.01 5.32c1.16.9 2.51 1.44 3.9 1.61V17.9c-.87-.15-1.71-.49-2.46-1.03L7.1 18.32zM13 4.07V1L8.450 5.55 13 10V6.09c2.84.48 5 2.94 5 5.91s-2.16 5.43-5 5.91v2.02c3.95-.49 7-3.85 7-7.93s-3.05-7.44-7-7.93z"/></svg></div>
<div style="position:absolute;left:747px;top:55px;width:1090px;height:42px;background:#9E9E9E"></div>
<div style="position:absolute;left:898px;top:55px;width:2px;height:42px;background:#8C8C8C"></div>
<div style="position:absolute;left:986px;top:55px;width:2px;height:42px;background:#8C8C8C"></div>
<div style="position:absolute;left:1102px;top:55px;width:2px;height:42px;background:#8C8C8C"></div>
<svg style="position:absolute;left:780px;top:64px;width:24px;height:24px" viewBox="0 0 24 24"><path fill="#444" d="M16.59 8.59L12 13.17 7.41 8.59 6 10l6 6 6-6z"/></svg>
<div style="position:absolute;left:845px;top:69px;width:400px;text-align:center;font-size:15px;line-height:1;color:#333;white-space:nowrap;will-change:transform;">OUT</div>
<div style="position:absolute;left:1114px;top:69px;font-size:15px;line-height:1;color:#333;white-space:nowrap;will-change:transform;">S10000T11_Air</div>
<div style="position:absolute;left:1431px;top:66px;width:400px;text-align:right;font-size:21px;line-height:1;color:#222;white-space:nowrap;will-change:transform;">出射介质</div>
<div style="position:absolute;left:747px;top:97px;width:1090px;height:46px;background:#E3E3E3"></div>
<div style="position:absolute;left:747px;top:143px;width:1090px;height:2px;background:#C8C8C8"></div>
<div style="position:absolute;left:898px;top:97px;width:2px;height:46px;background:#C8C8C8"></div>
<div style="position:absolute;left:986px;top:97px;width:2px;height:46px;background:#C8C8C8"></div>
<div style="position:absolute;left:1102px;top:97px;width:2px;height:46px;background:#C8C8C8"></div>
<div style="position:absolute;left:1358px;top:97px;width:2px;height:46px;background:#C8C8C8"></div>
<div style="position:absolute;left:1428px;top:97px;width:2px;height:46px;background:#C8C8C8"></div>
<div style="position:absolute;left:1504px;top:97px;width:2px;height:46px;background:#C8C8C8"></div>
<div style="position:absolute;left:1580px;top:97px;width:2px;height:46px;background:#C8C8C8"></div>
<div style="position:absolute;left:1650px;top:97px;width:2px;height:46px;background:#C8C8C8"></div>
<div style="position:absolute;left:765px;top:111px;width:14px;height:14px;border:2px solid #666;border-radius:1px"></div>
<div style="position:absolute;left:646px;top:111px;width:400px;text-align:center;font-size:22px;line-height:1;color:#333;white-space:nowrap;will-change:transform;">序号</div>
<div style="position:absolute;left:743px;top:111px;width:400px;text-align:center;font-size:22px;line-height:1;color:#333;white-space:nowrap;will-change:transform;">膜厚</div>
<div style="position:absolute;left:845px;top:111px;width:400px;text-align:center;font-size:22px;line-height:1;color:#333;white-space:nowrap;will-change:transform;">符号</div>
<div style="position:absolute;left:1030px;top:111px;width:400px;text-align:center;font-size:22px;line-height:1;color:#333;white-space:nowrap;will-change:transform;">材料</div>
<div style="position:absolute;left:1385px;top:111px;width:14px;height:14px;border:2px solid #666;border-radius:1px"></div>
<div style="position:absolute;left:1267px;top:111px;width:400px;text-align:center;font-size:22px;line-height:1;color:#333;white-space:nowrap;will-change:transform;">下限</div>
<div style="position:absolute;left:1343px;top:111px;width:400px;text-align:center;font-size:22px;line-height:1;color:#333;white-space:nowrap;will-change:transform;">上限</div>
<div style="position:absolute;left:1607px;top:111px;width:14px;height:14px;border:2px solid #666;border-radius:1px"></div>
<svg style="position:absolute;left:1671px;top:108px;width:24px;height:24px" viewBox="0 0 24 24"><path fill="#3AA845" d="M13 7h-2v4H7v2h4v4h2v-4h4v-2h-4V7zm-1-5C6.48 2 2 6.48 2 12s4.48 10 10 10 10-4.48 10-10S17.52 2 12 2zm0 18c-4.41 0-8-3.59-8-8s3.59-8 8-8 8 3.59 8 8-3.59 8-8 8z"/></svg>
<svg style="position:absolute;left:1713px;top:108px;width:24px;height:24px" viewBox="0 0 24 24"><path fill="#F03A30" d="M7 11v2h10v-2H7zm5-9C6.48 2 2 6.48 2 12s4.48 10 10 10 10-4.48 10-10S17.52 2 12 2zm0 18c-4.41 0-8-3.59-8-8s3.59-8 8-8 8 3.59 8 8-3.59 8-8 8z"/></svg>
<svg style="position:absolute;left:1755px;top:108px;width:24px;height:24px" viewBox="0 0 24 24"><path fill="#555" d="M18 2H9c-1.1 0-2 .9-2 2v12c0 1.1.9 2 2 2h9c1.1 0 2-.9 2-2V4c0-1.1-.9-2-2-2zm0 14H9V4h9v12zM3 15v-2h2v2H3zm0-5.5h2v2H3v-2zM10 20h2v2h-2v-2zm-7-1.5v-2h2v2H3zM5 22c-1.1 0-2-.9-2-2h2v2zm3.5 0h-2v-2h2v2zm5 0v-2h2c0 1.1-.9 2-2 2zM5 6v2H3c0-1.1.9-2 2-2z"/></svg>
<svg style="position:absolute;left:1791px;top:108px;width:24px;height:24px" viewBox="0 0 24 24"><path fill="#555" d="M19 2h-4.18C14.4.84 13.3 0 12 0c-1.3 0-2.4.84-2.82 2H5c-1.1 0-2 .9-2 2v16c0 1.1.9 2 2 2h14c1.1 0 2-.9 2-2V4c0-1.1-.9-2-2-2zm-7 0c.55 0 1 .45 1 1s-.45 1-1 1-1-.45-1-1 .45-1 1-1zm7 18H5V4h2v3h10V4h2v16z"/></svg>
<div style="position:absolute;left:747px;top:145px;width:1090px;height:60px;background:#4CAF50"></div>
<div style="position:absolute;left:898px;top:145px;width:2px;height:60px;background:#43A047"></div>
<div style="position:absolute;left:986px;top:145px;width:2px;height:60px;background:#43A047"></div>
<div style="position:absolute;left:1102px;top:145px;width:2px;height:60px;background:#43A047"></div>
<svg style="position:absolute;left:780px;top:145px;width:24px;height:24px" viewBox="0 0 24 24"><path fill="#1f3a21" d="M16.59 8.59L12 13.17 7.41 8.59 6 10l6 6 6-6z"/></svg>
<svg style="position:absolute;left:780px;top:181px;width:24px;height:24px" viewBox="0 0 24 24"><path fill="#1f3a21" d="M12 8l-6 6 1.41 1.41L12 10.83l4.59 4.58L18 14z"/></svg>
<div class="inp" style="left:910px;top:160px;width:66px;height:30px;background:transparent;border-color:#2f6f33"></div>
<div style="position:absolute;left:913px;top:167px;font-size:17px;line-height:1;color:#111;white-space:nowrap;will-change:transform;">6.0</div>
<div style="position:absolute;left:845px;top:168px;width:400px;text-align:center;font-size:15px;line-height:1;color:#111;white-space:nowrap;will-change:transform;">SUB</div>
<div style="position:absolute;left:1114px;top:168px;font-size:15px;line-height:1;color:#111;white-space:nowrap;will-change:transform;">S10000T12_Glass</div>
<div style="position:absolute;left:1431px;top:165px;width:400px;text-align:right;font-size:21px;line-height:1;color:#111;white-space:nowrap;will-change:transform;">基板</div>
<div style="position:absolute;left:747px;top:205px;width:1090px;height:46px;background:#E3E3E3"></div>
<div style="position:absolute;left:747px;top:251px;width:1090px;height:2px;background:#C8C8C8"></div>
<div style="position:absolute;left:898px;top:205px;width:2px;height:46px;background:#C8C8C8"></div>
<div style="position:absolute;left:986px;top:205px;width:2px;height:46px;background:#C8C8C8"></div>
<div style="position:absolute;left:1102px;top:205px;width:2px;height:46px;background:#C8C8C8"></div>
<div style="position:absolute;left:1358px;top:205px;width:2px;height:46px;background:#C8C8C8"></div>
<div style="position:absolute;left:1428px;top:205px;width:2px;height:46px;background:#C8C8C8"></div>
<div style="position:absolute;left:1504px;top:205px;width:2px;height:46px;background:#C8C8C8"></div>
<div style="position:absolute;left:1580px;top:205px;width:2px;height:46px;background:#C8C8C8"></div>
<div style="position:absolute;left:1650px;top:205px;width:2px;height:46px;background:#C8C8C8"></div>
<div style="position:absolute;left:765px;top:219px;width:14px;height:14px;border:2px solid #666;border-radius:1px"></div>
<div style="position:absolute;left:646px;top:219px;width:400px;text-align:center;font-size:22px;line-height:1;color:#333;white-space:nowrap;will-change:transform;">序号</div>
<div style="position:absolute;left:743px;top:219px;width:400px;text-align:center;font-size:22px;line-height:1;color:#333;white-space:nowrap;will-change:transform;">膜厚</div>
<div style="position:absolute;left:845px;top:219px;width:400px;text-align:center;font-size:22px;line-height:1;color:#333;white-space:nowrap;will-change:transform;">符号</div>
<div style="position:absolute;left:1030px;top:219px;width:400px;text-align:center;font-size:22px;line-height:1;color:#333;white-space:nowrap;will-change:transform;">材料</div>
<div style="position:absolute;left:1385px;top:219px;width:14px;height:14px;border:2px solid #666;border-radius:1px"></div>
<div style="position:absolute;left:1267px;top:219px;width:400px;text-align:center;font-size:22px;line-height:1;color:#333;white-space:nowrap;will-change:transform;">下限</div>
<div style="position:absolute;left:1343px;top:219px;width:400px;text-align:center;font-size:22px;line-height:1;color:#333;white-space:nowrap;will-change:transform;">上限</div>
<div style="position:absolute;left:1607px;top:219px;width:18px;height:18px;background:#2196F3;border-radius:1px"><svg style="position:absolute;left:0;top:0;width:18px;height:18px" viewBox="0 0 18 18"><path d="M3.6 9.2L7.2 12.6L14.6 5.2" fill="none" stroke="#fff" stroke-width="2.4"/></svg></div>
<svg style="position:absolute;left:1671px;top:216px;width:24px;height:24px" viewBox="0 0 24 24"><path fill="#3AA845" d="M13 7h-2v4H7v2h4v4h2v-4h4v-2h-4V7zm-1-5C6.48 2 2 6.48 2 12s4.48 10 10 10 10-4.48 10-10S17.52 2 12 2zm0 18c-4.41 0-8-3.59-8-8s3.59-8 8-8 8 3.59 8 8-3.59 8-8 8z"/></svg>
<svg style="position:absolute;left:1713px;top:216px;width:24px;height:24px" viewBox="0 0 24 24"><path fill="#F03A30" d="M7 11v2h10v-2H7zm5-9C6.48 2 2 6.48 2 12s4.48 10 10 10 10-4.48 10-10S17.52 2 12 2zm0 18c-4.41 0-8-3.59-8-8s3.59-8 8-8 8 3.59 8 8-3.59 8-8 8z"/></svg>
<svg style="position:absolute;left:1755px;top:216px;width:24px;height:24px" viewBox="0 0 24 24"><path fill="#555" d="M18 2H9c-1.1 0-2 .9-2 2v12c0 1.1.9 2 2 2h9c1.1 0 2-.9 2-2V4c0-1.1-.9-2-2-2zm0 14H9V4h9v12zM3 15v-2h2v2H3zm0-5.5h2v2H3v-2zM10 20h2v2h-2v-2zm-7-1.5v-2h2v2H3zM5 22c-1.1 0-2-.9-2-2h2v2zm3.5 0h-2v-2h2v2zm5 0v-2h2c0 1.1-.9 2-2 2zM5 6v2H3c0-1.1.9-2 2-2z"/></svg>
<svg style="position:absolute;left:1791px;top:216px;width:24px;height:24px" viewBox="0 0 24 24"><path fill="#555" d="M19 2h-4.18C14.4.84 13.3 0 12 0c-1.3 0-2.4.84-2.82 2H5c-1.1 0-2 .9-2 2v16c0 1.1.9 2 2 2h14c1.1 0 2-.9 2-2V4c0-1.1-.9-2-2-2zm-7 0c.55 0 1 .45 1 1s-.45 1-1 1-1-.45-1-1 .45-1 1-1zm7 18H5V4h2v3h10V4h2v16z"/></svg>
<div style="position:absolute;left:747px;top:294px;width:1090px;height:2px;background:#E0E0E0"></div>
<div style="position:absolute;left:898px;top:253px;width:2px;height:43px;background:#E0E0E0"></div>
<div style="position:absolute;left:986px;top:253px;width:2px;height:43px;background:#E0E0E0"></div>
<div style="position:absolute;left:1102px;top:253px;width:2px;height:43px;background:#E0E0E0"></div>
<div style="position:absolute;left:1358px;top:253px;width:2px;height:43px;background:#E0E0E0"></div>
<div style="position:absolute;left:1428px;top:253px;width:2px;height:43px;background:#E0E0E0"></div>
<div style="position:absolute;left:1504px;top:253px;width:2px;height:43px;background:#E0E0E0"></div>
<div style="position:absolute;left:1580px;top:253px;width:2px;height:43px;background:#E0E0E0"></div>
<div style="position:absolute;left:1650px;top:253px;width:2px;height:43px;background:#E0E0E0"></div>
<div style="position:absolute;left:765px;top:265px;width:14px;height:14px;border:2px solid #666;border-radius:1px"></div>
<div style="position:absolute;left:646px;top:267px;width:400px;text-align:center;font-size:16px;line-height:1;color:#222;white-space:nowrap;will-change:transform;-webkit-text-stroke:0.4px #222">1</div>
<div class="inp" style="left:910px;top:259px;width:66px;height:30px"></div>
<div style="position:absolute;left:913px;top:266px;font-size:17px;line-height:1;color:#333;white-space:nowrap;will-change:transform;">32.2</div>
<div class="inp" style="left:998px;top:259px;width:42px;height:30px"></div>
<div style="position:absolute;left:818px;top:266px;width:400px;text-align:center;font-size:17px;line-height:1;color:#333;white-space:nowrap;will-change:transform;">N</div>
<svg style="position:absolute;left:1055px;top:262px;width:24px;height:24px" viewBox="0 0 24 24"><path fill="#5a5a5a" d="M16.59 8.59L12 13.17 7.41 8.59 6 10l6 6 6-6z"/></svg>
<div style="position:absolute;left:1111px;top:266px;font-size:15px;line-height:1;color:#333;white-space:nowrap;will-change:transform;">S10000T16_SiNx</div>
<svg style="position:absolute;left:1309px;top:262px;width:24px;height:24px" viewBox="0 0 24 24"><path fill="#5a5a5a" d="M16.59 8.59L12 13.17 7.41 8.59 6 10l6 6 6-6z"/></svg>
<div style="position:absolute;left:1385px;top:265px;width:14px;height:14px;border:2px solid #666;border-radius:1px"></div>
<div class="inp" style="left:1440px;top:259px;width:54px;height:30px"></div>
<div style="position:absolute;left:1442px;top:266px;font-size:17px;line-height:1;color:#333;white-space:nowrap;will-change:transform;">0.1</div>
<div class="inp" style="left:1516px;top:259px;width:54px;height:30px"></div>
<div style="position:absolute;left:1519px;top:266px;font-size:17px;line-height:1;color:#333;white-space:nowrap;will-change:transform;">200.0</div>
<div style="position:absolute;left:1607px;top:265px;width:18px;height:18px;background:#2196F3;border-radius:1px"><svg style="position:absolute;left:0;top:0;width:18px;height:18px" viewBox="0 0 18 18"><path d="M3.6 9.2L7.2 12.6L14.6 5.2" fill="none" stroke="#fff" stroke-width="2.4"/></svg></div>
<svg style="position:absolute;left:1671px;top:262px;width:24px;height:24px" viewBox="0 0 24 24"><path fill="#3AA845" d="M13 7h-2v4H7v2h4v4h2v-4h4v-2h-4V7zm-1-5C6.48 2 2 6.48 2 12s4.48 10 10 10 10-4.48 10-10S17.52 2 12 2zm0 18c-4.41 0-8-3.59-8-8s3.59-8 8-8 8 3.59 8 8-3.59 8-8 8z"/></svg>
<svg style="position:absolute;left:1713px;top:262px;width:24px;height:24px" viewBox="0 0 24 24"><path fill="#F03A30" d="M7 11v2h10v-2H7zm5-9C6.48 2 2 6.48 2 12s4.48 10 10 10 10-4.48 10-10S17.52 2 12 2zm0 18c-4.41 0-8-3.59-8-8s3.59-8 8-8 8 3.59 8 8-3.59 8-8 8z"/></svg>
<div style="position:absolute;left:1755px;top:258px;width:48px;height:32px;background:#E3E3E3;border-radius:4px"><svg style="position:absolute;left:12px;top:4px;width:24px;height:24px" viewBox="0 0 24 24"><path fill="#5c5c5c" d="M20 9H4v2h16V9zM4 15h16v-2H4v2z"/></svg></div>
<div style="position:absolute;left:747px;top:336px;width:1090px;height:2px;background:#E0E0E0"></div>
<div style="position:absolute;left:898px;top:295px;width:2px;height:43px;background:#E0E0E0"></div>
<div style="position:absolute;left:986px;top:295px;width:2px;height:43px;background:#E0E0E0"></div>
<div style="position:absolute;left:1102px;top:295px;width:2px;height:43px;background:#E0E0E0"></div>
<div style="position:absolute;left:1358px;top:295px;width:2px;height:43px;background:#E0E0E0"></div>
<div style="position:absolute;left:1428px;top:295px;width:2px;height:43px;background:#E0E0E0"></div>
<div style="position:absolute;left:1504px;top:295px;width:2px;height:43px;background:#E0E0E0"></div>
<div style="position:absolute;left:1580px;top:295px;width:2px;height:43px;background:#E0E0E0"></div>
<div style="position:absolute;left:1650px;top:295px;width:2px;height:43px;background:#E0E0E0"></div>
<div style="position:absolute;left:765px;top:307px;width:14px;height:14px;border:2px solid #666;border-radius:1px"></div>
<div style="position:absolute;left:646px;top:309px;width:400px;text-align:center;font-size:16px;line-height:1;color:#222;white-space:nowrap;will-change:transform;-webkit-text-stroke:0.4px #222">2</div>
<div class="inp" style="left:910px;top:301px;width:66px;height:30px"></div>
<div style="position:absolute;left:913px;top:308px;font-size:17px;line-height:1;color:#333;white-space:nowrap;will-change:transform;">0.1</div>
<div class="inp" style="left:998px;top:301px;width:42px;height:30px"></div>
<div style="position:absolute;left:818px;top:308px;width:400px;text-align:center;font-size:17px;line-height:1;color:#333;white-space:nowrap;will-change:transform;">K</div>
<svg style="position:absolute;left:1055px;top:304px;width:24px;height:24px" viewBox="0 0 24 24"><path fill="#5a5a5a" d="M16.59 8.59L12 13.17 7.41 8.59 6 10l6 6 6-6z"/></svg>
<div style="position:absolute;left:1111px;top:308px;font-size:15px;line-height:1;color:#333;white-space:nowrap;will-change:transform;">S10000T16_ZnAlO</div>
<svg style="position:absolute;left:1309px;top:304px;width:24px;height:24px" viewBox="0 0 24 24"><path fill="#5a5a5a" d="M16.59 8.59L12 13.17 7.41 8.59 6 10l6 6 6-6z"/></svg>
<div style="position:absolute;left:1385px;top:307px;width:14px;height:14px;border:2px solid #666;border-radius:1px"></div>
<div class="inp" style="left:1440px;top:301px;width:54px;height:30px"></div>
<div style="position:absolute;left:1442px;top:308px;font-size:17px;line-height:1;color:#333;white-space:nowrap;will-change:transform;">0.1</div>
<div class="inp" style="left:1516px;top:301px;width:54px;height:30px"></div>
<div style="position:absolute;left:1519px;top:308px;font-size:17px;line-height:1;color:#333;white-space:nowrap;will-change:transform;">200.0</div>
<div style="position:absolute;left:1607px;top:307px;width:18px;height:18px;background:#2196F3;border-radius:1px"><svg style="position:absolute;left:0;top:0;width:18px;height:18px" viewBox="0 0 18 18"><path d="M3.6 9.2L7.2 12.6L14.6 5.2" fill="none" stroke="#fff" stroke-width="2.4"/></svg></div>
<svg style="position:absolute;left:1671px;top:304px;width:24px;height:24px" viewBox="0 0 24 24"><path fill="#3AA845" d="M13 7h-2v4H7v2h4v4h2v-4h4v-2h-4V7zm-1-5C6.48 2 2 6.48 2 12s4.48 10 10 10 10-4.48 10-10S17.52 2 12 2zm0 18c-4.41 0-8-3.59-8-8s3.59-8 8-8 8 3.59 8 8-3.59 8-8 8z"/></svg>
<svg style="position:absolute;left:1713px;top:304px;width:24px;height:24px" viewBox="0 0 24 24"><path fill="#F03A30" d="M7 11v2h10v-2H7zm5-9C6.48 2 2 6.48 2 12s4.48 10 10 10 10-4.48 10-10S17.52 2 12 2zm0 18c-4.41 0-8-3.59-8-8s3.59-8 8-8 8 3.59 8 8-3.59 8-8 8z"/></svg>
<div style="position:absolute;left:1755px;top:300px;width:48px;height:32px;background:#E3E3E3;border-radius:4px"><svg style="position:absolute;left:12px;top:4px;width:24px;height:24px" viewBox="0 0 24 24"><path fill="#5c5c5c" d="M20 9H4v2h16V9zM4 15h16v-2H4v2z"/></svg></div>
<div style="position:absolute;left:747px;top:378px;width:1090px;height:2px;background:#E0E0E0"></div>
<div style="position:absolute;left:898px;top:337px;width:2px;height:43px;background:#E0E0E0"></div>
<div style="position:absolute;left:986px;top:337px;width:2px;height:43px;background:#E0E0E0"></div>
<div style="position:absolute;left:1102px;top:337px;width:2px;height:43px;background:#E0E0E0"></div>
<div style="position:absolute;left:1358px;top:337px;width:2px;height:43px;background:#E0E0E0"></div>
<div style="position:absolute;left:1428px;top:337px;width:2px;height:43px;background:#E0E0E0"></div>
<div style="position:absolute;left:1504px;top:337px;width:2px;height:43px;background:#E0E0E0"></div>
<div style="position:absolute;left:1580px;top:337px;width:2px;height:43px;background:#E0E0E0"></div>
<div style="position:absolute;left:1650px;top:337px;width:2px;height:43px;background:#E0E0E0"></div>
<div style="position:absolute;left:765px;top:349px;width:14px;height:14px;border:2px solid #666;border-radius:1px"></div>
<div style="position:absolute;left:646px;top:351px;width:400px;text-align:center;font-size:16px;line-height:1;color:#222;white-space:nowrap;will-change:transform;-webkit-text-stroke:0.4px #222">3</div>
<div class="inp" style="left:910px;top:343px;width:66px;height:30px"></div>
<div style="position:absolute;left:913px;top:350px;font-size:17px;line-height:1;color:#333;white-space:nowrap;will-change:transform;">0.1</div>
<div class="inp" style="left:998px;top:343px;width:42px;height:30px"></div>
<div style="position:absolute;left:818px;top:350px;width:400px;text-align:center;font-size:17px;line-height:1;color:#333;white-space:nowrap;will-change:transform;">C</div>
<svg style="position:absolute;left:1055px;top:346px;width:24px;height:24px" viewBox="0 0 24 24"><path fill="#5a5a5a" d="M16.59 8.59L12 13.17 7.41 8.59 6 10l6 6 6-6z"/></svg>
<div style="position:absolute;left:1111px;top:350px;font-size:15px;line-height:1;color:#333;white-space:nowrap;will-change:transform;">S10000T15_NiCr</div>
<svg style="position:absolute;left:1309px;top:346px;width:24px;height:24px" viewBox="0 0 24 24"><path fill="#5a5a5a" d="M16.59 8.59L12 13.17 7.41 8.59 6 10l6 6 6-6z"/></svg>
<div style="position:absolute;left:1385px;top:349px;width:14px;height:14px;border:2px solid #666;border-radius:1px"></div>
<div class="inp" style="left:1440px;top:343px;width:54px;height:30px"></div>
<div style="position:absolute;left:1442px;top:350px;font-size:17px;line-height:1;color:#333;white-space:nowrap;will-change:transform;">0.1</div>
<div class="inp" style="left:1516px;top:343px;width:54px;height:30px"></div>
<div style="position:absolute;left:1519px;top:350px;font-size:17px;line-height:1;color:#333;white-space:nowrap;will-change:transform;">200.0</div>
<div style="position:absolute;left:1607px;top:349px;width:18px;height:18px;background:#2196F3;border-radius:1px"><svg style="position:absolute;left:0;top:0;width:18px;height:18px" viewBox="0 0 18 18"><path d="M3.6 9.2L7.2 12.6L14.6 5.2" fill="none" stroke="#fff" stroke-width="2.4"/></svg></div>
<svg style="position:absolute;left:1671px;top:346px;width:24px;height:24px" viewBox="0 0 24 24"><path fill="#3AA845" d="M13 7h-2v4H7v2h4v4h2v-4h4v-2h-4V7zm-1-5C6.48 2 2 6.48 2 12s4.48 10 10 10 10-4.48 10-10S17.52 2 12 2zm0 18c-4.41 0-8-3.59-8-8s3.59-8 8-8 8 3.59 8 8-3.59 8-8 8z"/></svg>
<svg style="position:absolute;left:1713px;top:346px;width:24px;height:24px" viewBox="0 0 24 24"><path fill="#F03A30" d="M7 11v2h10v-2H7zm5-9C6.48 2 2 6.48 2 12s4.48 10 10 10 10-4.48 10-10S17.52 2 12 2zm0 18c-4.41 0-8-3.59-8-8s3.59-8 8-8 8 3.59 8 8-3.59 8-8 8z"/></svg>
<div style="position:absolute;left:1755px;top:342px;width:48px;height:32px;background:#E3E3E3;border-radius:4px"><svg style="position:absolute;left:12px;top:4px;width:24px;height:24px" viewBox="0 0 24 24"><path fill="#5c5c5c" d="M20 9H4v2h16V9zM4 15h16v-2H4v2z"/></svg></div>
<div style="position:absolute;left:747px;top:420px;width:1090px;height:2px;background:#E0E0E0"></div>
<div style="position:absolute;left:898px;top:379px;width:2px;height:43px;background:#E0E0E0"></div>
<div style="position:absolute;left:986px;top:379px;width:2px;height:43px;background:#E0E0E0"></div>
<div style="position:absolute;left:1102px;top:379px;width:2px;height:43px;background:#E0E0E0"></div>
<div style="position:absolute;left:1358px;top:379px;width:2px;height:43px;background:#E0E0E0"></div>
<div style="position:absolute;left:1428px;top:379px;width:2px;height:43px;background:#E0E0E0"></div>
<div style="position:absolute;left:1504px;top:379px;width:2px;height:43px;background:#E0E0E0"></div>
<div style="position:absolute;left:1580px;top:379px;width:2px;height:43px;background:#E0E0E0"></div>
<div style="position:absolute;left:1650px;top:379px;width:2px;height:43px;background:#E0E0E0"></div>
<div style="position:absolute;left:765px;top:391px;width:14px;height:14px;border:2px solid #666;border-radius:1px"></div>
<div style="position:absolute;left:646px;top:393px;width:400px;text-align:center;font-size:16px;line-height:1;color:#222;white-space:nowrap;will-change:transform;-webkit-text-stroke:0.4px #222">4</div>
<div class="inp" style="left:910px;top:385px;width:66px;height:30px"></div>
<div style="position:absolute;left:913px;top:392px;font-size:17px;line-height:1;color:#333;white-space:nowrap;will-change:transform;">3.3</div>
<div class="inp" style="left:998px;top:385px;width:42px;height:30px"></div>
<div style="position:absolute;left:818px;top:392px;width:400px;text-align:center;font-size:17px;line-height:1;color:#333;white-space:nowrap;will-change:transform;">A</div>
<svg style="position:absolute;left:1055px;top:388px;width:24px;height:24px" viewBox="0 0 24 24"><path fill="#5a5a5a" d="M16.59 8.59L12 13.17 7.41 8.59 6 10l6 6 6-6z"/></svg>
<div style="position:absolute;left:1111px;top:392px;font-size:15px;line-height:1;color:#333;white-space:nowrap;will-change:transform;">S10000T13_Ag</div>
<svg style="position:absolute;left:1309px;top:388px;width:24px;height:24px" viewBox="0 0 24 24"><path fill="#5a5a5a" d="M16.59 8.59L12 13.17 7.41 8.59 6 10l6 6 6-6z"/></svg>
<div style="position:absolute;left:1385px;top:391px;width:14px;height:14px;border:2px solid #666;border-radius:1px"></div>
<div class="inp" style="left:1440px;top:385px;width:54px;height:30px"></div>
<div style="position:absolute;left:1442px;top:392px;font-size:17px;line-height:1;color:#333;white-space:nowrap;will-change:transform;">0.1</div>
<div class="inp" style="left:1516px;top:385px;width:54px;height:30px"></div>
<div style="position:absolute;left:1519px;top:392px;font-size:17px;line-height:1;color:#333;white-space:nowrap;will-change:transform;">200.0</div>
<div style="position:absolute;left:1607px;top:391px;width:18px;height:18px;background:#2196F3;border-radius:1px"><svg style="position:absolute;left:0;top:0;width:18px;height:18px" viewBox="0 0 18 18"><path d="M3.6 9.2L7.2 12.6L14.6 5.2" fill="none" stroke="#fff" stroke-width="2.4"/></svg></div>
<svg style="position:absolute;left:1671px;top:388px;width:24px;height:24px" viewBox="0 0 24 24"><path fill="#3AA845" d="M13 7h-2v4H7v2h4v4h2v-4h4v-2h-4V7zm-1-5C6.48 2 2 6.48 2 12s4.48 10 10 10 10-4.48 10-10S17.52 2 12 2zm0 18c-4.41 0-8-3.59-8-8s3.59-8 8-8 8 3.59 8 8-3.59 8-8 8z"/></svg>
<svg style="position:absolute;left:1713px;top:388px;width:24px;height:24px" viewBox="0 0 24 24"><path fill="#F03A30" d="M7 11v2h10v-2H7zm5-9C6.48 2 2 6.48 2 12s4.48 10 10 10 10-4.48 10-10S17.52 2 12 2zm0 18c-4.41 0-8-3.59-8-8s3.59-8 8-8 8 3.59 8 8-3.59 8-8 8z"/></svg>
<div style="position:absolute;left:1755px;top:384px;width:48px;height:32px;background:#E3E3E3;border-radius:4px"><svg style="position:absolute;left:12px;top:4px;width:24px;height:24px" viewBox="0 0 24 24"><path fill="#5c5c5c" d="M20 9H4v2h16V9zM4 15h16v-2H4v2z"/></svg></div>
<div style="position:absolute;left:747px;top:462px;width:1090px;height:2px;background:#E0E0E0"></div>
<div style="position:absolute;left:898px;top:421px;width:2px;height:43px;background:#E0E0E0"></div>
<div style="position:absolute;left:986px;top:421px;width:2px;height:43px;background:#E0E0E0"></div>
<div style="position:absolute;left:1102px;top:421px;width:2px;height:43px;background:#E0E0E0"></div>
<div style="position:absolute;left:1358px;top:421px;width:2px;height:43px;background:#E0E0E0"></div>
<div style="position:absolute;left:1428px;top:421px;width:2px;height:43px;background:#E0E0E0"></div>
<div style="position:absolute;left:1504px;top:421px;width:2px;height:43px;background:#E0E0E0"></div>
<div style="position:absolute;left:1580px;top:421px;width:2px;height:43px;background:#E0E0E0"></div>
<div style="position:absolute;left:1650px;top:421px;width:2px;height:43px;background:#E0E0E0"></div>
<div style="position:absolute;left:765px;top:433px;width:14px;height:14px;border:2px solid #666;border-radius:1px"></div>
<div style="position:absolute;left:646px;top:435px;width:400px;text-align:center;font-size:16px;line-height:1;color:#222;white-space:nowrap;will-change:transform;-webkit-text-stroke:0.4px #222">5</div>
<div class="inp" style="left:910px;top:427px;width:66px;height:30px"></div>
<div style="position:absolute;left:913px;top:434px;font-size:17px;line-height:1;color:#333;white-space:nowrap;will-change:transform;">0.1</div>
<div class="inp" style="left:998px;top:427px;width:42px;height:30px"></div>
<div style="position:absolute;left:818px;top:434px;width:400px;text-align:center;font-size:17px;line-height:1;color:#333;white-space:nowrap;will-change:transform;">C</div>
<svg style="position:absolute;left:1055px;top:430px;width:24px;height:24px" viewBox="0 0 24 24"><path fill="#5a5a5a" d="M16.59 8.59L12 13.17 7.41 8.59 6 10l6 6 6-6z"/></svg>
<div style="position:absolute;left:1111px;top:434px;font-size:15px;line-height:1;color:#333;white-space:nowrap;will-change:transform;">S10000T15_NiCr</div>
<svg style="position:absolute;left:1309px;top:430px;width:24px;height:24px" viewBox="0 0 24 24"><path fill="#5a5a5a" d="M16.59 8.59L12 13.17 7.41 8.59 6 10l6 6 6-6z"/></svg>
<div style="position:absolute;left:1385px;top:433px;width:14px;height:14px;border:2px solid #666;border-radius:1px"></div>
<div class="inp" style="left:1440px;top:427px;width:54px;height:30px"></div>
<div style="position:absolute;left:1442px;top:434px;font-size:17px;line-height:1;color:#333;white-space:nowrap;will-change:transform;">0.1</div>
<div class="inp" style="left:1516px;top:427px;width:54px;height:30px"></div>
<div style="position:absolute;left:1519px;top:434px;font-size:17px;line-height:1;color:#333;white-space:nowrap;will-change:transform;">200.0</div>
<div style="position:absolute;left:1607px;top:433px;width:18px;height:18px;background:#2196F3;border-radius:1px"><svg style="position:absolute;left:0;top:0;width:18px;height:18px" viewBox="0 0 18 18"><path d="M3.6 9.2L7.2 12.6L14.6 5.2" fill="none" stroke="#fff" stroke-width="2.4"/></svg></div>
<svg style="position:absolute;left:1671px;top:430px;width:24px;height:24px" viewBox="0 0 24 24"><path fill="#3AA845" d="M13 7h-2v4H7v2h4v4h2v-4h4v-2h-4V7zm-1-5C6.48 2 2 6.48 2 12s4.48 10 10 10 10-4.48 10-10S17.52 2 12 2zm0 18c-4.41 0-8-3.59-8-8s3.59-8 8-8 8 3.59 8 8-3.59 8-8 8z"/></svg>
<svg style="position:absolute;left:1713px;top:430px;width:24px;height:24px" viewBox="0 0 24 24"><path fill="#F03A30" d="M7 11v2h10v-2H7zm5-9C6.48 2 2 6.48 2 12s4.48 10 10 10 10-4.48 10-10S17.52 2 12 2zm0 18c-4.41 0-8-3.59-8-8s3.59-8 8-8 8 3.59 8 8-3.59 8-8 8z"/></svg>
<div style="position:absolute;left:1755px;top:426px;width:48px;height:32px;background:#E3E3E3;border-radius:4px"><svg style="position:absolute;left:12px;top:4px;width:24px;height:24px" viewBox="0 0 24 24"><path fill="#5c5c5c" d="M20 9H4v2h16V9zM4 15h16v-2H4v2z"/></svg></div>
<div style="position:absolute;left:747px;top:504px;width:1090px;height:2px;background:#E0E0E0"></div>
<div style="position:absolute;left:898px;top:463px;width:2px;height:43px;background:#E0E0E0"></div>
<div style="position:absolute;left:986px;top:463px;width:2px;height:43px;background:#E0E0E0"></div>
<div style="position:absolute;left:1102px;top:463px;width:2px;height:43px;background:#E0E0E0"></div>
<div style="position:absolute;left:1358px;top:463px;width:2px;height:43px;background:#E0E0E0"></div>
<div style="position:absolute;left:1428px;top:463px;width:2px;height:43px;background:#E0E0E0"></div>
<div style="position:absolute;left:1504px;top:463px;width:2px;height:43px;background:#E0E0E0"></div>
<div style="position:absolute;left:1580px;top:463px;width:2px;height:43px;background:#E0E0E0"></div>
<div style="position:absolute;left:1650px;top:463px;width:2px;height:43px;background:#E0E0E0"></div>
<div style="position:absolute;left:765px;top:475px;width:14px;height:14px;border:2px solid #666;border-radius:1px"></div>
<div style="position:absolute;left:646px;top:477px;width:400px;text-align:center;font-size:16px;line-height:1;color:#222;white-space:nowrap;will-change:transform;-webkit-text-stroke:0.4px #222">6</div>
<div class="inp" style="left:910px;top:469px;width:66px;height:30px"></div>
<div style="position:absolute;left:913px;top:476px;font-size:17px;line-height:1;color:#333;white-space:nowrap;will-change:transform;">94.4</div>
<div class="inp" style="left:998px;top:469px;width:42px;height:30px"></div>
<div style="position:absolute;left:818px;top:476px;width:400px;text-align:center;font-size:17px;line-height:1;color:#333;white-space:nowrap;will-change:transform;">N</div>
<svg style="position:absolute;left:1055px;top:472px;width:24px;height:24px" viewBox="0 0 24 24"><path fill="#5a5a5a" d="M16.59 8.59L12 13.17 7.41 8.59 6 10l6 6 6-6z"/></svg>
<div style="position:absolute;left:1111px;top:476px;font-size:15px;line-height:1;color:#333;white-space:nowrap;will-change:transform;">S10000T16_SiNx</div>
<svg style="position:absolute;left:1309px;top:472px;width:24px;height:24px" viewBox="0 0 24 24"><path fill="#5a5a5a" d="M16.59 8.59L12 13.17 7.41 8.59 6 10l6 6 6-6z"/></svg>
<div style="position:absolute;left:1385px;top:475px;width:14px;height:14px;border:2px solid #666;border-radius:1px"></div>
<div class="inp" style="left:1440px;top:469px;width:54px;height:30px"></div>
<div style="position:absolute;left:1442px;top:476px;font-size:17px;line-height:1;color:#333;white-space:nowrap;will-change:transform;">0.1</div>
<div class="inp" style="left:1516px;top:469px;width:54px;height:30px"></div>
<div style="position:absolute;left:1519px;top:476px;font-size:17px;line-height:1;color:#333;white-space:nowrap;will-change:transform;">100.0</div>
<div style="position:absolute;left:1607px;top:475px;width:18px;height:18px;background:#2196F3;border-radius:1px"><svg style="position:absolute;left:0;top:0;width:18px;height:18px" viewBox="0 0 18 18"><path d="M3.6 9.2L7.2 12.6L14.6 5.2" fill="none" stroke="#fff" stroke-width="2.4"/></svg></div>
<svg style="position:absolute;left:1671px;top:472px;width:24px;height:24px" viewBox="0 0 24 24"><path fill="#3AA845" d="M13 7h-2v4H7v2h4v4h2v-4h4v-2h-4V7zm-1-5C6.48 2 2 6.48 2 12s4.48 10 10 10 10-4.48 10-10S17.52 2 12 2zm0 18c-4.41 0-8-3.59-8-8s3.59-8 8-8 8 3.59 8 8-3.59 8-8 8z"/></svg>
<svg style="position:absolute;left:1713px;top:472px;width:24px;height:24px" viewBox="0 0 24 24"><path fill="#F03A30" d="M7 11v2h10v-2H7zm5-9C6.48 2 2 6.48 2 12s4.48 10 10 10 10-4.48 10-10S17.52 2 12 2zm0 18c-4.41 0-8-3.59-8-8s3.59-8 8-8 8 3.59 8 8-3.59 8-8 8z"/></svg>
<div style="position:absolute;left:1755px;top:468px;width:48px;height:32px;background:#E3E3E3;border-radius:4px"><svg style="position:absolute;left:12px;top:4px;width:24px;height:24px" viewBox="0 0 24 24"><path fill="#5c5c5c" d="M20 9H4v2h16V9zM4 15h16v-2H4v2z"/></svg></div>
<div style="position:absolute;left:747px;top:546px;width:1090px;height:2px;background:#E0E0E0"></div>
<div style="position:absolute;left:898px;top:505px;width:2px;height:43px;background:#E0E0E0"></div>
<div style="position:absolute;left:986px;top:505px;width:2px;height:43px;background:#E0E0E0"></div>
<div style="position:absolute;left:1102px;top:505px;width:2px;height:43px;background:#E0E0E0"></div>
<div style="position:absolute;left:1358px;top:505px;width:2px;height:43px;background:#E0E0E0"></div>
<div style="position:absolute;left:1428px;top:505px;width:2px;height:43px;background:#E0E0E0"></div>
<div style="position:absolute;left:1504px;top:505px;width:2px;height:43px;background:#E0E0E0"></div>
<div style="position:absolute;left:1580px;top:505px;width:2px;height:43px;background:#E0E0E0"></div>
<div style="position:absolute;left:1650px;top:505px;width:2px;height:43px;background:#E0E0E0"></div>
<div style="position:absolute;left:765px;top:517px;width:14px;height:14px;border:2px solid #666;border-radius:1px"></div>
<div style="position:absolute;left:646px;top:519px;width:400px;text-align:center;font-size:16px;line-height:1;color:#222;white-space:nowrap;will-change:transform;-webkit-text-stroke:0.4px #222">7</div>
<div class="inp" style="left:910px;top:511px;width:66px;height:30px"></div>
<div style="position:absolute;left:913px;top:518px;font-size:17px;line-height:1;color:#333;white-space:nowrap;will-change:transform;">0.1</div>
<div class="inp" style="left:998px;top:511px;width:42px;height:30px"></div>
<div style="position:absolute;left:818px;top:518px;width:400px;text-align:center;font-size:17px;line-height:1;color:#333;white-space:nowrap;will-change:transform;">K</div>
<svg style="position:absolute;left:1055px;top:514px;width:24px;height:24px" viewBox="0 0 24 24"><path fill="#5a5a5a" d="M16.59 8.59L12 13.17 7.41 8.59 6 10l6 6 6-6z"/></svg>
<div style="position:absolute;left:1111px;top:518px;font-size:15px;line-height:1;color:#333;white-space:nowrap;will-change:transform;">S10000T16_ZnAlO</div>
<svg style="position:absolute;left:1309px;top:514px;width:24px;height:24px" viewBox="0 0 24 24"><path fill="#5a5a5a" d="M16.59 8.59L12 13.17 7.41 8.59 6 10l6 6 6-6z"/></svg>
<div style="position:absolute;left:1385px;top:517px;width:14px;height:14px;border:2px solid #666;border-radius:1px"></div>
<div class="inp" style="left:1440px;top:511px;width:54px;height:30px"></div>
<div style="position:absolute;left:1442px;top:518px;font-size:17px;line-height:1;color:#333;white-space:nowrap;will-change:transform;">0.1</div>
<div class="inp" style="left:1516px;top:511px;width:54px;height:30px"></div>
<div style="position:absolute;left:1519px;top:518px;font-size:17px;line-height:1;color:#333;white-space:nowrap;will-change:transform;">100.0</div>
<div style="position:absolute;left:1607px;top:517px;width:18px;height:18px;background:#2196F3;border-radius:1px"><svg style="position:absolute;left:0;top:0;width:18px;height:18px" viewBox="0 0 18 18"><path d="M3.6 9.2L7.2 12.6L14.6 5.2" fill="none" stroke="#fff" stroke-width="2.4"/></svg></div>
<svg style="position:absolute;left:1671px;top:514px;width:24px;height:24px" viewBox="0 0 24 24"><path fill="#3AA845" d="M13 7h-2v4H7v2h4v4h2v-4h4v-2h-4V7zm-1-5C6.48 2 2 6.48 2 12s4.48 10 10 10 10-4.48 10-10S17.52 2 12 2zm0 18c-4.41 0-8-3.59-8-8s3.59-8 8-8 8 3.59 8 8-3.59 8-8 8z"/></svg>
<svg style="position:absolute;left:1713px;top:514px;width:24px;height:24px" viewBox="0 0 24 24"><path fill="#F03A30" d="M7 11v2h10v-2H7zm5-9C6.48 2 2 6.48 2 12s4.48 10 10 10 10-4.48 10-10S17.52 2 12 2zm0 18c-4.41 0-8-3.59-8-8s3.59-8 8-8 8 3.59 8 8-3.59 8-8 8z"/></svg>
<div style="position:absolute;left:1755px;top:510px;width:48px;height:32px;background:#E3E3E3;border-radius:4px"><svg style="position:absolute;left:12px;top:4px;width:24px;height:24px" viewBox="0 0 24 24"><path fill="#5c5c5c" d="M20 9H4v2h16V9zM4 15h16v-2H4v2z"/></svg></div>
<div style="position:absolute;left:747px;top:588px;width:1090px;height:2px;background:#E0E0E0"></div>
<div style="position:absolute;left:898px;top:547px;width:2px;height:43px;background:#E0E0E0"></div>
<div style="position:absolute;left:986px;top:547px;width:2px;height:43px;background:#E0E0E0"></div>
<div style="position:absolute;left:1102px;top:547px;width:2px;height:43px;background:#E0E0E0"></div>
<div style="position:absolute;left:1358px;top:547px;width:2px;height:43px;background:#E0E0E0"></div>
<div style="position:absolute;left:1428px;top:547px;width:2px;height:43px;background:#E0E0E0"></div>
<div style="position:absolute;left:1504px;top:547px;width:2px;height:43px;background:#E0E0E0"></div>
<div style="position:absolute;left:1580px;top:547px;width:2px;height:43px;background:#E0E0E0"></div>
<div style="position:absolute;left:1650px;top:547px;width:2px;height:43px;background:#E0E0E0"></div>
<div style="position:absolute;left:765px;top:559px;width:14px;height:14px;border:2px solid #666;border-radius:1px"></div>
<div style="position:absolute;left:646px;top:561px;width:400px;text-align:center;font-size:16px;line-height:1;color:#222;white-space:nowrap;will-change:transform;-webkit-text-stroke:0.4px #222">8</div>
<div class="inp" style="left:910px;top:553px;width:66px;height:30px"></div>
<div style="position:absolute;left:913px;top:560px;font-size:17px;line-height:1;color:#333;white-space:nowrap;will-change:transform;">103.6</div>
<div class="inp" style="left:998px;top:553px;width:42px;height:30px"></div>
<div style="position:absolute;left:818px;top:560px;width:400px;text-align:center;font-size:17px;line-height:1;color:#333;white-space:nowrap;will-change:transform;">N</div>
<svg style="position:absolute;left:1055px;top:556px;width:24px;height:24px" viewBox="0 0 24 24"><path fill="#5a5a5a" d="M16.59 8.59L12 13.17 7.41 8.59 6 10l6 6 6-6z"/></svg>
<div style="position:absolute;left:1111px;top:560px;font-size:15px;line-height:1;color:#333;white-space:nowrap;will-change:transform;">S10000T16_SiNx</div>
<svg style="position:absolute;left:1309px;top:556px;width:24px;height:24px" viewBox="0 0 24 24"><path fill="#5a5a5a" d="M16.59 8.59L12 13.17 7.41 8.59 6 10l6 6 6-6z"/></svg>
<div style="position:absolute;left:1385px;top:559px;width:14px;height:14px;border:2px solid #666;border-radius:1px"></div>
<div class="inp" style="left:1440px;top:553px;width:54px;height:30px"></div>
<div style="position:absolute;left:1442px;top:560px;font-size:17px;line-height:1;color:#333;white-space:nowrap;will-change:transform;">0.1</div>
<div class="inp" style="left:1516px;top:553px;width:54px;height:30px"></div>
<div style="position:absolute;left:1519px;top:560px;font-size:17px;line-height:1;color:#333;white-space:nowrap;will-change:transform;">200.0</div>
<div style="position:absolute;left:1607px;top:559px;width:18px;height:18px;background:#2196F3;border-radius:1px"><svg style="position:absolute;left:0;top:0;width:18px;height:18px" viewBox="0 0 18 18"><path d="M3.6 9.2L7.2 12.6L14.6 5.2" fill="none" stroke="#fff" stroke-width="2.4"/></svg></div>
<svg style="position:absolute;left:1671px;top:556px;width:24px;height:24px" viewBox="0 0 24 24"><path fill="#3AA845" d="M13 7h-2v4H7v2h4v4h2v-4h4v-2h-4V7zm-1-5C6.48 2 2 6.48 2 12s4.48 10 10 10 10-4.48 10-10S17.52 2 12 2zm0 18c-4.41 0-8-3.59-8-8s3.59-8 8-8 8 3.59 8 8-3.59 8-8 8z"/></svg>
<svg style="position:absolute;left:1713px;top:556px;width:24px;height:24px" viewBox="0 0 24 24"><path fill="#F03A30" d="M7 11v2h10v-2H7zm5-9C6.48 2 2 6.48 2 12s4.48 10 10 10 10-4.48 10-10S17.52 2 12 2zm0 18c-4.41 0-8-3.59-8-8s3.59-8 8-8 8 3.59 8 8-3.59 8-8 8z"/></svg>
<div style="position:absolute;left:1755px;top:552px;width:48px;height:32px;background:#E3E3E3;border-radius:4px"><svg style="position:absolute;left:12px;top:4px;width:24px;height:24px" viewBox="0 0 24 24"><path fill="#5c5c5c" d="M20 9H4v2h16V9zM4 15h16v-2H4v2z"/></svg></div>
<div style="position:absolute;left:747px;top:630px;width:1090px;height:2px;background:#E0E0E0"></div>
<div style="position:absolute;left:898px;top:589px;width:2px;height:43px;background:#E0E0E0"></div>
<div style="position:absolute;left:986px;top:589px;width:2px;height:43px;background:#E0E0E0"></div>
<div style="position:absolute;left:1102px;top:589px;width:2px;height:43px;background:#E0E0E0"></div>
<div style="position:absolute;left:1358px;top:589px;width:2px;height:43px;background:#E0E0E0"></div>
<div style="position:absolute;left:1428px;top:589px;width:2px;height:43px;background:#E0E0E0"></div>
<div style="position:absolute;left:1504px;top:589px;width:2px;height:43px;background:#E0E0E0"></div>
<div style="position:absolute;left:1580px;top:589px;width:2px;height:43px;background:#E0E0E0"></div>
<div style="position:absolute;left:1650px;top:589px;width:2px;height:43px;background:#E0E0E0"></div>
<div style="position:absolute;left:765px;top:601px;width:14px;height:14px;border:2px solid #666;border-radius:1px"></div>
<div style="position:absolute;left:646px;top:603px;width:400px;text-align:center;font-size:16px;line-height:1;color:#222;white-space:nowrap;will-change:transform;-webkit-text-stroke:0.4px #222">9</div>
<div class="inp" style="left:910px;top:595px;width:66px;height:30px"></div>
<div style="position:absolute;left:913px;top:602px;font-size:17px;line-height:1;color:#333;white-space:nowrap;will-change:transform;">0.2</div>
<div class="inp" style="left:998px;top:595px;width:42px;height:30px"></div>
<div style="position:absolute;left:818px;top:602px;width:400px;text-align:center;font-size:17px;line-height:1;color:#333;white-space:nowrap;will-change:transform;">C</div>
<svg style="position:absolute;left:1055px;top:598px;width:24px;height:24px" viewBox="0 0 24 24"><path fill="#5a5a5a" d="M16.59 8.59L12 13.17 7.41 8.59 6 10l6 6 6-6z"/></svg>
<div style="position:absolute;left:1111px;top:602px;font-size:15px;line-height:1;color:#333;white-space:nowrap;will-change:transform;">S10000T15_NiCr</div>
<svg style="position:absolute;left:1309px;top:598px;width:24px;height:24px" viewBox="0 0 24 24"><path fill="#5a5a5a" d="M16.59 8.59L12 13.17 7.41 8.59 6 10l6 6 6-6z"/></svg>
<div style="position:absolute;left:1385px;top:601px;width:14px;height:14px;border:2px solid #666;border-radius:1px"></div>
<div class="inp" style="left:1440px;top:595px;width:54px;height:30px"></div>
<div style="position:absolute;left:1442px;top:602px;font-size:17px;line-height:1;color:#333;white-space:nowrap;will-change:transform;">0.1</div>
<div class="inp" style="left:1516px;top:595px;width:54px;height:30px"></div>
<div style="position:absolute;left:1519px;top:602px;font-size:17px;line-height:1;color:#333;white-space:nowrap;will-change:transform;">200.0</div>
<div style="position:absolute;left:1607px;top:601px;width:18px;height:18px;background:#2196F3;border-radius:1px"><svg style="position:absolute;left:0;top:0;width:18px;height:18px" viewBox="0 0 18 18"><path d="M3.6 9.2L7.2 12.6L14.6 5.2" fill="none" stroke="#fff" stroke-width="2.4"/></svg></div>
<svg style="position:absolute;left:1671px;top:598px;width:24px;height:24px" viewBox="0 0 24 24"><path fill="#3AA845" d="M13 7h-2v4H7v2h4v4h2v-4h4v-2h-4V7zm-1-5C6.48 2 2 6.48 2 12s4.48 10 10 10 10-4.48 10-10S17.52 2 12 2zm0 18c-4.41 0-8-3.59-8-8s3.59-8 8-8 8 3.59 8 8-3.59 8-8 8z"/></svg>
<svg style="position:absolute;left:1713px;top:598px;width:24px;height:24px" viewBox="0 0 24 24"><path fill="#F03A30" d="M7 11v2h10v-2H7zm5-9C6.48 2 2 6.48 2 12s4.48 10 10 10 10-4.48 10-10S17.52 2 12 2zm0 18c-4.41 0-8-3.59-8-8s3.59-8 8-8 8 3.59 8 8-3.59 8-8 8z"/></svg>
<div style="position:absolute;left:1755px;top:594px;width:48px;height:32px;background:#E3E3E3;border-radius:4px"><svg style="position:absolute;left:12px;top:4px;width:24px;height:24px" viewBox="0 0 24 24"><path fill="#5c5c5c" d="M20 9H4v2h16V9zM4 15h16v-2H4v2z"/></svg></div>
<div style="position:absolute;left:747px;top:672px;width:1090px;height:2px;background:#E0E0E0"></div>
<div style="position:absolute;left:898px;top:631px;width:2px;height:43px;background:#E0E0E0"></div>
<div style="position:absolute;left:986px;top:631px;width:2px;height:43px;background:#E0E0E0"></div>
<div style="position:absolute;left:1102px;top:631px;width:2px;height:43px;background:#E0E0E0"></div>
<div style="position:absolute;left:1358px;top:631px;width:2px;height:43px;background:#E0E0E0"></div>
<div style="position:absolute;left:1428px;top:631px;width:2px;height:43px;background:#E0E0E0"></div>
<div style="position:absolute;left:1504px;top:631px;width:2px;height:43px;background:#E0E0E0"></div>
<div style="position:absolute;left:1580px;top:631px;width:2px;height:43px;background:#E0E0E0"></div>
<div style="position:absolute;left:1650px;top:631px;width:2px;height:43px;background:#E0E0E0"></div>
<div style="position:absolute;left:765px;top:643px;width:14px;height:14px;border:2px solid #666;border-radius:1px"></div>
<div style="position:absolute;left:646px;top:645px;width:400px;text-align:center;font-size:16px;line-height:1;color:#222;white-space:nowrap;will-change:transform;-webkit-text-stroke:0.4px #222">10</div>
<div class="inp" style="left:910px;top:637px;width:66px;height:30px"></div>
<div style="position:absolute;left:913px;top:644px;font-size:17px;line-height:1;color:#333;white-space:nowrap;will-change:transform;">3.9</div>
<div class="inp" style="left:998px;top:637px;width:42px;height:30px"></div>
<div style="position:absolute;left:818px;top:644px;width:400px;text-align:center;font-size:17px;line-height:1;color:#333;white-space:nowrap;will-change:transform;">A</div>
<svg style="position:absolute;left:1055px;top:640px;width:24px;height:24px" viewBox="0 0 24 24"><path fill="#5a5a5a" d="M16.59 8.59L12 13.17 7.41 8.59 6 10l6 6 6-6z"/></svg>
<div style="position:absolute;left:1111px;top:644px;font-size:15px;line-height:1;color:#333;white-space:nowrap;will-change:transform;">S10000T13_Ag</div>
<svg style="position:absolute;left:1309px;top:640px;width:24px;height:24px" viewBox="0 0 24 24"><path fill="#5a5a5a" d="M16.59 8.59L12 13.17 7.41 8.59 6 10l6 6 6-6z"/></svg>
<div style="position:absolute;left:1385px;top:643px;width:14px;height:14px;border:2px solid #666;border-radius:1px"></div>
<div class="inp" style="left:1440px;top:637px;width:54px;height:30px"></div>
<div style="position:absolute;left:1442px;top:644px;font-size:17px;line-height:1;color:#333;white-space:nowrap;will-change:transform;">0.1</div>
<div class="inp" style="left:1516px;top:637px;width:54px;height:30px"></div>
<div style="position:absolute;left:1519px;top:644px;font-size:17px;line-height:1;color:#333;white-space:nowrap;will-change:transform;">200.0</div>
<div style="position:absolute;left:1607px;top:643px;width:18px;height:18px;background:#2196F3;border-radius:1px"><svg style="position:absolute;left:0;top:0;width:18px;height:18px" viewBox="0 0 18 18"><path d="M3.6 9.2L7.2 12.6L14.6 5.2" fill="none" stroke="#fff" stroke-width="2.4"/></svg></div>
<svg style="position:absolute;left:1671px;top:640px;width:24px;height:24px" viewBox="0 0 24 24"><path fill="#3AA845" d="M13 7h-2v4H7v2h4v4h2v-4h4v-2h-4V7zm-1-5C6.48 2 2 6.48 2 12s4.48 10 10 10 10-4.48 10-10S17.52 2 12 2zm0 18c-4.41 0-8-3.59-8-8s3.59-8 8-8 8 3.59 8 8-3.59 8-8 8z"/></svg>
<svg style="position:absolute;left:1713px;top:640px;width:24px;height:24px" viewBox="0 0 24 24"><path fill="#F03A30" d="M7 11v2h10v-2H7zm5-9C6.48 2 2 6.48 2 12s4.48 10 10 10 10-4.48 10-10S17.52 2 12 2zm0 18c-4.41 0-8-3.59-8-8s3.59-8 8-8 8 3.59 8 8-3.59 8-8 8z"/></svg>
<div style="position:absolute;left:1755px;top:636px;width:48px;height:32px;background:#E3E3E3;border-radius:4px"><svg style="position:absolute;left:12px;top:4px;width:24px;height:24px" viewBox="0 0 24 24"><path fill="#5c5c5c" d="M20 9H4v2h16V9zM4 15h16v-2H4v2z"/></svg></div>
<div style="position:absolute;left:747px;top:714px;width:1090px;height:2px;background:#E0E0E0"></div>
<div style="position:absolute;left:898px;top:673px;width:2px;height:43px;background:#E0E0E0"></div>
<div style="position:absolute;left:986px;top:673px;width:2px;height:43px;background:#E0E0E0"></div>
<div style="position:absolute;left:1102px;top:673px;width:2px;height:43px;background:#E0E0E0"></div>
<div style="position:absolute;left:1358px;top:673px;width:2px;height:43px;background:#E0E0E0"></div>
<div style="position:absolute;left:1428px;top:673px;width:2px;height:43px;background:#E0E0E0"></div>
<div style="position:absolute;left:1504px;top:673px;width:2px;height:43px;background:#E0E0E0"></div>
<div style="position:absolute;left:1580px;top:673px;width:2px;height:43px;background:#E0E0E0"></div>
<div style="position:absolute;left:1650px;top:673px;width:2px;height:43px;background:#E0E0E0"></div>
<div style="position:absolute;left:765px;top:685px;width:14px;height:14px;border:2px solid #666;border-radius:1px"></div>
<div style="position:absolute;left:646px;top:687px;width:400px;text-align:center;font-size:16px;line-height:1;color:#222;white-space:nowrap;will-change:transform;-webkit-text-stroke:0.4px #222">11</div>
<div class="inp" style="left:910px;top:679px;width:66px;height:30px"></div>
<div style="position:absolute;left:913px;top:686px;font-size:17px;line-height:1;color:#333;white-space:nowrap;will-change:transform;">4.3</div>
<div class="inp" style="left:998px;top:679px;width:42px;height:30px"></div>
<div style="position:absolute;left:818px;top:686px;width:400px;text-align:center;font-size:17px;line-height:1;color:#333;white-space:nowrap;will-change:transform;">C</div>
<svg style="position:absolute;left:1055px;top:682px;width:24px;height:24px" viewBox="0 0 24 24"><path fill="#5a5a5a" d="M16.59 8.59L12 13.17 7.41 8.59 6 10l6 6 6-6z"/></svg>
<div style="position:absolute;left:1111px;top:686px;font-size:15px;line-height:1;color:#333;white-space:nowrap;will-change:transform;">S10000T15_NiCr</div>
<svg style="position:absolute;left:1309px;top:682px;width:24px;height:24px" viewBox="0 0 24 24"><path fill="#5a5a5a" d="M16.59 8.59L12 13.17 7.41 8.59 6 10l6 6 6-6z"/></svg>
<div style="position:absolute;left:1385px;top:685px;width:14px;height:14px;border:2px solid #666;border-radius:1px"></div>
<div class="inp" style="left:1440px;top:679px;width:54px;height:30px"></div>
<div style="position:absolute;left:1442px;top:686px;font-size:17px;line-height:1;color:#333;white-space:nowrap;will-change:transform;">0.1</div>
<div class="inp" style="left:1516px;top:679px;width:54px;height:30px"></div>
<div style="position:absolute;left:1519px;top:686px;font-size:17px;line-height:1;color:#333;white-space:nowrap;will-change:transform;">200.0</div>
<div style="position:absolute;left:1607px;top:685px;width:18px;height:18px;background:#2196F3;border-radius:1px"><svg style="position:absolute;left:0;top:0;width:18px;height:18px" viewBox="0 0 18 18"><path d="M3.6 9.2L7.2 12.6L14.6 5.2" fill="none" stroke="#fff" stroke-width="2.4"/></svg></div>
<svg style="position:absolute;left:1671px;top:682px;width:24px;height:24px" viewBox="0 0 24 24"><path fill="#3AA845" d="M13 7h-2v4H7v2h4v4h2v-4h4v-2h-4V7zm-1-5C6.48 2 2 6.48 2 12s4.48 10 10 10 10-4.48 10-10S17.52 2 12 2zm0 18c-4.41 0-8-3.59-8-8s3.59-8 8-8 8 3.59 8 8-3.59 8-8 8z"/></svg>
<svg style="position:absolute;left:1713px;top:682px;width:24px;height:24px" viewBox="0 0 24 24"><path fill="#F03A30" d="M7 11v2h10v-2H7zm5-9C6.48 2 2 6.48 2 12s4.48 10 10 10 10-4.48 10-10S17.52 2 12 2zm0 18c-4.41 0-8-3.59-8-8s3.59-8 8-8 8 3.59 8 8-3.59 8-8 8z"/></svg>
<div style="position:absolute;left:1755px;top:678px;width:48px;height:32px;background:#E3E3E3;border-radius:4px"><svg style="position:absolute;left:12px;top:4px;width:24px;height:24px" viewBox="0 0 24 24"><path fill="#5c5c5c" d="M20 9H4v2h16V9zM4 15h16v-2H4v2z"/></svg></div>
<div style="position:absolute;left:747px;top:756px;width:1090px;height:2px;background:#E0E0E0"></div>
<div style="position:absolute;left:898px;top:715px;width:2px;height:43px;background:#E0E0E0"></div>
<div style="position:absolute;left:986px;top:715px;width:2px;height:43px;background:#E0E0E0"></div>
<div style="position:absolute;left:1102px;top:715px;width:2px;height:43px;background:#E0E0E0"></div>
<div style="position:absolute;left:1358px;top:715px;width:2px;height:43px;background:#E0E0E0"></div>
<div style="position:absolute;left:1428px;top:715px;width:2px;height:43px;background:#E0E0E0"></div>
<div style="position:absolute;left:1504px;top:715px;width:2px;height:43px;background:#E0E0E0"></div>
<div style="position:absolute;left:1580px;top:715px;width:2px;height:43px;background:#E0E0E0"></div>
<div style="position:absolute;left:1650px;top:715px;width:2px;height:43px;background:#E0E0E0"></div>
<div style="position:absolute;left:765px;top:727px;width:14px;height:14px;border:2px solid #666;border-radius:1px"></div>
<div style="position:absolute;left:646px;top:729px;width:400px;text-align:center;font-size:16px;line-height:1;color:#222;white-space:nowrap;will-change:transform;-webkit-text-stroke:0.4px #222">12</div>
<div class="inp" style="left:910px;top:721px;width:66px;height:30px"></div>
<div style="position:absolute;left:913px;top:728px;font-size:17px;line-height:1;color:#333;white-space:nowrap;will-change:transform;">36.3</div>
<div class="inp" style="left:998px;top:721px;width:42px;height:30px"></div>
<div style="position:absolute;left:818px;top:728px;width:400px;text-align:center;font-size:17px;line-height:1;color:#333;white-space:nowrap;will-change:transform;">N</div>
<svg style="position:absolute;left:1055px;top:724px;width:24px;height:24px" viewBox="0 0 24 24"><path fill="#5a5a5a" d="M16.59 8.59L12 13.17 7.41 8.59 6 10l6 6 6-6z"/></svg>
<div style="position:absolute;left:1111px;top:728px;font-size:15px;line-height:1;color:#333;white-space:nowrap;will-change:transform;">S10000T16_SiNx</div>
<svg style="position:absolute;left:1309px;top:724px;width:24px;height:24px" viewBox="0 0 24 24"><path fill="#5a5a5a" d="M16.59 8.59L12 13.17 7.41 8.59 6 10l6 6 6-6z"/></svg>
<div style="position:absolute;left:1385px;top:727px;width:14px;height:14px;border:2px solid #666;border-radius:1px"></div>
<div class="inp" style="left:1440px;top:721px;width:54px;height:30px"></div>
<div style="position:absolute;left:1442px;top:728px;font-size:17px;line-height:1;color:#333;white-space:nowrap;will-change:transform;">0.1</div>
<div class="inp" style="left:1516px;top:721px;width:54px;height:30px"></div>
<div style="position:absolute;left:1519px;top:728px;font-size:17px;line-height:1;color:#333;white-space:nowrap;will-change:transform;">200.0</div>
<div style="position:absolute;left:1607px;top:727px;width:18px;height:18px;background:#2196F3;border-radius:1px"><svg style="position:absolute;left:0;top:0;width:18px;height:18px" viewBox="0 0 18 18"><path d="M3.6 9.2L7.2 12.6L14.6 5.2" fill="none" stroke="#fff" stroke-width="2.4"/></svg></div>
<svg style="position:absolute;left:1671px;top:724px;width:24px;height:24px" viewBox="0 0 24 24"><path fill="#3AA845" d="M13 7h-2v4H7v2h4v4h2v-4h4v-2h-4V7zm-1-5C6.48 2 2 6.48 2 12s4.48 10 10 10 10-4.48 10-10S17.52 2 12 2zm0 18c-4.41 0-8-3.59-8-8s3.59-8 8-8 8 3.59 8 8-3.59 8-8 8z"/></svg>
<svg style="position:absolute;left:1713px;top:724px;width:24px;height:24px" viewBox="0 0 24 24"><path fill="#F03A30" d="M7 11v2h10v-2H7zm5-9C6.48 2 2 6.48 2 12s4.48 10 10 10 10-4.48 10-10S17.52 2 12 2zm0 18c-4.41 0-8-3.59-8-8s3.59-8 8-8 8 3.59 8 8-3.59 8-8 8z"/></svg>
<div style="position:absolute;left:1755px;top:720px;width:48px;height:32px;background:#E3E3E3;border-radius:4px"><svg style="position:absolute;left:12px;top:4px;width:24px;height:24px" viewBox="0 0 24 24"><path fill="#5c5c5c" d="M20 9H4v2h16V9zM4 15h16v-2H4v2z"/></svg></div>
<div style="position:absolute;left:747px;top:757px;width:1090px;height:42px;background:#9E9E9E"></div>
<div style="position:absolute;left:898px;top:757px;width:2px;height:42px;background:#8C8C8C"></div>
<div style="position:absolute;left:986px;top:757px;width:2px;height:42px;background:#8C8C8C"></div>
<div style="position:absolute;left:1102px;top:757px;width:2px;height:42px;background:#8C8C8C"></div>
<svg style="position:absolute;left:780px;top:766px;width:24px;height:24px" viewBox="0 0 24 24"><path fill="#444" d="M12 8l-6 6 1.41 1.41L12 10.83l4.59 4.58L18 14z"/></svg>
<div style="position:absolute;left:845px;top:771px;width:400px;text-align:center;font-size:15px;line-height:1;color:#333;white-space:nowrap;will-change:transform;">IN</div>
<div style="position:absolute;left:1114px;top:771px;font-size:15px;line-height:1;color:#333;white-space:nowrap;will-change:transform;">S10000T11_Air</div>
<div style="position:absolute;left:1431px;top:768px;width:400px;text-align:right;font-size:21px;line-height:1;color:#222;white-space:nowrap;will-change:transform;">入射介质</div>
<div style="position:absolute;left:1841px;top:3px;width:80px;height:913px;background:#E3E3E3;border-radius:5px;box-shadow:0 1px 1.5px rgba(0,0,0,.3)"></div>
<div class="fab" style="left:1850px;top:260px"><svg style="position:absolute;left:9px;top:9px;width:36px;height:36px" viewBox="0 0 24 24"><path fill="#fff" stroke="#fff" stroke-width="0.35" d="M19 7v4H5.83l3.58-3.59L8 6l-6 6 6 6 1.41-1.41L5.83 13H21V7z"/></svg></div>
<div class="fab" style="left:1850px;top:334px"><svg style="position:absolute;left:9px;top:9px;width:36px;height:36px" viewBox="0 0 24 24"><path fill="#fff" stroke="#fff" stroke-width="0.35" d="M10 16.5l6-4.5-6-4.5v9zM12 2C6.48 2 2 6.48 2 12s4.48 10 10 10 10-4.48 10-10S17.52 2 12 2zm0 18c-4.41 0-8-3.59-8-8s3.59-8 8-8 8 3.59 8 8-3.59 8-8 8z"/></svg></div>
<div class="fab" style="left:1850px;top:408px"><svg style="position:absolute;left:9px;top:9px;width:36px;height:36px" viewBox="0 0 24 24"><path fill="#fff" stroke="#fff" stroke-width="0.35" d="M12 2C6.48 2 2 6.48 2 12s4.48 10 10 10 10-4.48 10-10S17.52 2 12 2zm0 18c-4.42 0-8-3.58-8-8s3.58-8 8-8 8 3.58 8 8-3.58 8-8 8zM8 8h8v8H8z"/></svg></div>
<div class="fab" style="left:1850px;top:482px"><svg style="position:absolute;left:9px;top:9px;width:36px;height:36px" viewBox="0 0 24 24"><path fill="#fff" stroke="#fff" stroke-width="0.35" d="M4 6H2v14c0 1.1.9 2 2 2h14v-2H4V6zm16-4H8c-1.1 0-2 .9-2 2v12c0 1.1.9 2 2 2h12c1.1 0 2-.9 2-2V4c0-1.1-.9-2-2-2zm0 14H8V4h12v12zm-7-2h2v-3h3V9h-3V6h-2v3h-3v2h3z"/></svg></div>
<div class="fab" style="left:1850px;top:556px"><svg style="position:absolute;left:9px;top:9px;width:36px;height:36px" viewBox="0 0 32 32"><g fill="none" stroke="#fff" stroke-width="2.3"><path d="M4.4 1.5V29.2H30.4"/><rect x="9.4" y="14.2" width="5.4" height="15"/><rect x="21.4" y="9.2" width="5.4" height="20"/></g><path d="M8.6 10.8h7M20.6 3.6h7" stroke="#fff" stroke-width="2.3"/></svg></div>
<div class="fab" style="left:1850px;top:630px"><svg style="position:absolute;left:9px;top:9px;width:36px;height:36px" viewBox="0 0 24 24"><path fill="#fff" d="M12 22C6.49 22 2 17.51 2 12S6.49 2 12 2s10 4.04 10 9c0 3.31-2.69 6-6 6h-1.77c-.28 0-.5.22-.5.5 0 .12.05.23.13.33.41.47.64 1.06.64 1.67 0 1.38-1.12 2.5-2.5 2.5zm0-18c-4.41 0-8 3.59-8 8s3.59 8 8 8c.28 0 .5-.22.5-.5 0-.16-.08-.28-.14-.35-.41-.46-.63-1.05-.63-1.65 0-1.38 1.12-2.5 2.5-2.5H16c2.21 0 4-1.790 4-4 0-3.86-3.59-7-8-7z"/><circle fill="#fff" cx="6.5" cy="11.5" r="1.5"/><circle fill="#fff" cx="9.5" cy="7.5" r="1.5"/><circle fill="#fff" cx="14.5" cy="7.5" r="1.5"/><circle fill="#fff" cx="17.5" cy="11.5" r="1.5"/></svg></div>
<div class="fab" style="left:1850px;top:704px"><svg style="position:absolute;left:9px;top:9px;width:36px;height:36px" viewBox="0 0 24 24"><path fill="#fff" stroke="#fff" stroke-width="0.35" d="M21.67 18.17l-5.3-5.3h-.99l-2.54 2.54v.99l5.3 5.3c.39.39 1.02.39 1.41 0l2.12-2.12c.39-.38.39-1.02 0-1.41zM17.34 10.19l1.41-1.41 2.12 2.12c1.17-1.17 1.17-3.07 0-4.24l-3.54-3.54-1.410 1.41V1.71l-.7-.71-3.54 3.54.71.71h2.83l-1.41 1.41 1.06 1.06-2.89 2.89-4.13-4.13V5.06L4.83 2.04 2 4.87 5.03 7.9h1.41l4.13 4.13-.85.85H7.61l-5.3 5.3c-.39.39-.39 1.02 0 1.41l2.12 2.12c.39.39 1.02.39 1.41 0l5.3-5.3v-2.12l5.15-5.15 1.05 1.05z"/></svg><svg style="position:absolute;left:0;top:0;width:54px;height:54px" viewBox="0 0 54 54"><path d="M16.3 37.3L22.4 32M32.1 32L37.9 37.3" stroke="#2196F3" stroke-width="1.3" stroke-linecap="round"/></svg></div>
<div class="fab" style="left:1850px;top:778px"><svg style="position:absolute;left:9px;top:9px;width:36px;height:36px" viewBox="0 0 24 24"><path fill="#fff" stroke="#fff" stroke-width="0.35" d="M20 18c1.1 0 1.99-.9 1.99-2L22 6c0-1.1-.9-2-2-2H4c-1.1 0-2 .9-2 2v10c0 1.1.9 2 2 2H0v2h24v-2h-4zM4 6h16v10H4V6z"/></svg></div>
<div class="fab" style="left:1850px;top:852px"><svg style="position:absolute;left:9px;top:9px;width:36px;height:36px" viewBox="0 0 24 24"><path fill="#fff" stroke="#fff" stroke-width="0.35" d="M13 3c-4.97 0-9 4.03-9 9H1l3.89 3.89.07.14L9 12H6c0-3.87 3.13-7 7-7s7 3.13 7 7-3.13 7-7 7c-1.93 0-3.68-.79-4.94-2.06l-1.42 1.42C8.27 19.99 10.51 21 13 21c4.97 0 9-4.03 9-9s-4.03-9-9-9zm-1 5v5l4.28 2.54.72-1.21-3.5-2.08V8H12z"/></svg></div>
<div style="position:absolute;left:0px;top:920px;width:1912px;height:31px;background:#E3E3E3"></div>
<div style="position:absolute;left:5px;top:923px;width:40px;height:30px;background:#F44336;border-radius:3px"><div style="position:absolute;left:0;top:7px;width:40px;text-align:center;font-size:15px;line-height:1;color:#222;will-change:transform">优化</div></div>
<div style="position:absolute;left:51px;top:923px;width:70px;height:30px;background:#4CAF50;border-radius:3px"><div style="position:absolute;left:0;top:7px;width:70px;text-align:center;font-size:15px;line-height:1;color:#222;will-change:transform">膜系计算</div></div>
<div style="position:absolute;left:127px;top:923px;width:70px;height:30px;background:#F44336;border-radius:3px"><div style="position:absolute;left:0;top:7px;width:70px;text-align:center;font-size:15px;line-height:1;color:#222;will-change:transform">手工模拟</div></div>
<div style="position:absolute;left:203px;top:923px;width:70px;height:30px;background:#F44336;border-radius:3px"><div style="position:absolute;left:0;top:7px;width:70px;text-align:center;font-size:15px;line-height:1;color:#222;will-change:transform">自动模拟</div></div>
<div style="position:absolute;left:1425px;top:931px;font-size:15px;line-height:1;color:#333;white-space:nowrap;will-change:transform;">10</div>
<div style="position:absolute;left:1453px;top:926px;width:280px;height:25px;background:#69F0AE"></div>
<div style="position:absolute;left:1393px;top:931px;width:400px;text-align:center;font-size:15px;line-height:1;color:#333;white-space:nowrap;will-change:transform;">100.0%</div>
<div style="position:absolute;left:1743px;top:931px;font-size:15px;line-height:1;color:#333;white-space:nowrap;will-change:transform;">10</div>
<div style="position:absolute;left:1783px;top:931px;font-size:15px;line-height:1;color:#333;white-space:nowrap;will-change:transform;">828.48</div>
<div style="position:absolute;left:1836px;top:930px;font-size:16px;line-height:1;color:#555;white-space:nowrap;will-change:transform;">|</div>
<div style="position:absolute;left:1847px;top:931px;font-size:15px;line-height:1;color:#333;white-space:nowrap;will-change:transform;">828.48</div>
</body></html>
